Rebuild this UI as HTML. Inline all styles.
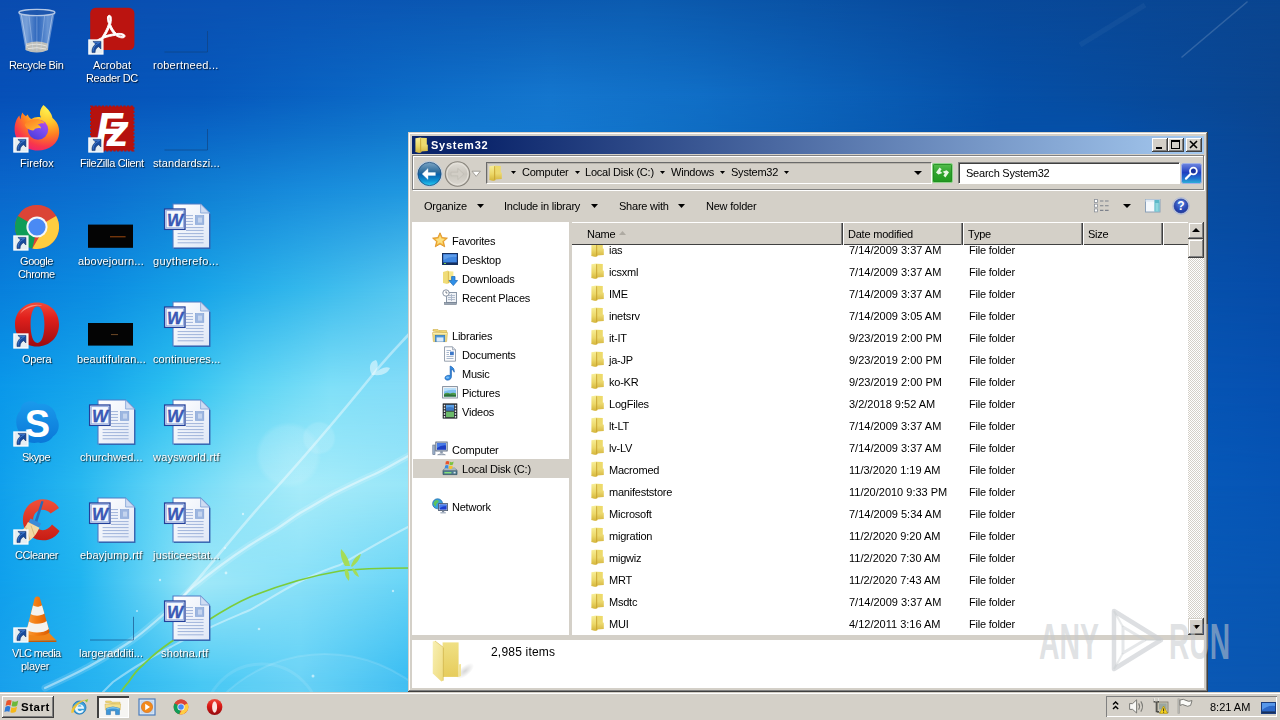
<!DOCTYPE html>
<html><head><meta charset="utf-8"><title>Desktop</title>
<style>
html,body{margin:0;padding:0}
body{width:1280px;height:720px;overflow:hidden;position:relative;font-family:"Liberation Sans",sans-serif;font-size:11px;color:#000;
background:#1273c8}
.abs{position:absolute}
#wall{display:none}
/* desktop icons */
.di{position:absolute;width:86px;text-align:center;color:#fff;font-size:11px;line-height:13px;text-shadow:1px 1px 1px rgba(0,0,0,.7),0 0 2px rgba(0,0,0,.25);letter-spacing:-.25px}
.di svg{display:block;overflow:visible}
.di svg text{text-shadow:none}
.di .lb{position:absolute;white-space:pre;text-align:left;will-change:transform}
/* window */
#win{position:absolute;left:408px;top:132px;width:800px;height:560px;background:#d4d0c8;
box-shadow:inset -1px -1px #404040,inset 1px 1px #d4d0c8,inset -2px -2px #808080,inset 2px 2px #fff}
#title{position:absolute;left:4px;top:4px;width:792px;height:18px;background:linear-gradient(90deg,#0a246a 0%,#0a246a 8%,#a6caf0 100%)}
#title .txt{will-change:transform;position:absolute;left:19px;top:2px;color:#fff;font-weight:bold;font-size:11px;line-height:14px;letter-spacing:.75px}
.cbtn{position:absolute;top:2px;width:16px;height:14px;background:#d4d0c8;box-shadow:inset -1px -1px #404040,inset 1px 1px #fff,inset -2px -2px #808080,inset 2px 2px #d4d0c8}
#navbar{position:absolute;left:4px;top:23px;width:792px;height:35px;border:1px solid #808080;box-sizing:border-box;box-shadow:inset 1px 1px #fff, 1px 1px #fff}
#addr{position:absolute;left:78px;top:30px;width:446px;height:22px;box-sizing:border-box;border:1px solid #6a6a6a;border-right-color:#fff;border-bottom-color:#fff;box-shadow:inset 1px 1px #b8b4ac;background:#d4d0c8}
#search{position:absolute;left:550px;top:30px;width:222px;height:22px;box-sizing:border-box;border:1px solid #808080;border-right-color:#fff;border-bottom-color:#fff;box-shadow:inset 1px 1px #404040;background:#fff}
.t{position:absolute;white-space:pre;line-height:13px;letter-spacing:-.22px;will-change:transform}
#navpane{position:absolute;left:4px;top:90px;width:157px;height:413px;background:#fff}
#list{position:absolute;left:164px;top:90px;width:616px;height:413px;background:#fff;overflow:hidden}
#hdr{position:absolute;left:0;top:0;width:616px;height:23px;background:#d4d0c8;box-shadow:inset 0 1px #fff,inset 0 -1px #404040}
.sep{position:absolute;top:1px;width:1px;height:22px;background:#404040;box-shadow:1px 0 #fff,-1px 0 #808080}
.row{position:absolute;left:0;width:616px;height:22px}
#sb{position:absolute;left:780px;top:90px;width:16px;height:413px;background:repeating-conic-gradient(#fff 0% 25%,#d4d0c8 0% 50%) 0 0/2px 2px}
.sbb{position:absolute;left:0;width:16px;background:#d4d0c8;box-shadow:inset -1px -1px #404040,inset 1px 1px #d4d0c8,inset -2px -2px #808080,inset 2px 2px #fff}
#details{position:absolute;left:4px;top:508px;width:792px;height:48px;background:#fff}
/* taskbar */
#task{position:absolute;left:0;top:692px;width:1280px;height:28px;background:#d4d0c8;box-shadow:inset 0 1px #d4d0c8,inset 0 2px #fff}
#start{position:absolute;left:2px;top:4px;width:52px;height:22px;background:#d4d0c8;box-shadow:inset -1px -1px #404040,inset 1px 1px #fff,inset -2px -2px #808080,inset 2px 2px #d4d0c8}
#tray{position:absolute;left:1106px;top:4px;width:171px;height:21px;box-shadow:inset 1px 1px #808080,inset -1px -1px #fff}
</style></head><body>
<div id="wall"></div>
<svg class="abs" style="left:0;top:0" width="1280" height="720" viewBox="0 0 1280 720"><defs><linearGradient id="wr0" gradientUnits="userSpaceOnUse" x1="0" y1="0" x2="1280" y2="0"><stop offset="0.0000" stop-color="#0a4cb0"/><stop offset="0.2344" stop-color="#0a54b4"/><stop offset="0.5000" stop-color="#0c5cb0"/><stop offset="0.7500" stop-color="#084a9c"/><stop offset="1.0000" stop-color="#0a4590"/></linearGradient><linearGradient id="wr1" gradientUnits="userSpaceOnUse" x1="0" y1="0" x2="1280" y2="0"><stop offset="0.0000" stop-color="#0650b8"/><stop offset="0.1562" stop-color="#0658bc"/><stop offset="0.3187" stop-color="#0c6cc8"/><stop offset="0.4297" stop-color="#1476ce"/><stop offset="0.5469" stop-color="#106ec6"/><stop offset="0.7812" stop-color="#0550a8"/><stop offset="1.0000" stop-color="#0a4590"/></linearGradient><linearGradient id="wr2" gradientUnits="userSpaceOnUse" x1="0" y1="0" x2="1280" y2="0"><stop offset="0.0000" stop-color="#0858c0"/><stop offset="0.1562" stop-color="#0a66c6"/><stop offset="0.3187" stop-color="#127ace"/><stop offset="0.4297" stop-color="#1478d0"/><stop offset="0.5000" stop-color="#1172c8"/><stop offset="0.7812" stop-color="#0550a8"/><stop offset="0.8594" stop-color="#0550a8"/><stop offset="1.0000" stop-color="#0a4694"/></linearGradient><linearGradient id="wr3" gradientUnits="userSpaceOnUse" x1="0" y1="0" x2="1280" y2="0"><stop offset="0.0000" stop-color="#0a68cc"/><stop offset="0.0781" stop-color="#0c70d0"/><stop offset="0.1562" stop-color="#1080d4"/><stop offset="0.2344" stop-color="#188cdc"/><stop offset="0.3187" stop-color="#2098e0"/><stop offset="0.4688" stop-color="#2098e0"/><stop offset="0.7812" stop-color="#0a58b0"/><stop offset="0.9437" stop-color="#084ca0"/><stop offset="1.0000" stop-color="#08489c"/></linearGradient><linearGradient id="wr4" gradientUnits="userSpaceOnUse" x1="0" y1="0" x2="1280" y2="0"><stop offset="0.0000" stop-color="#0880dc"/><stop offset="0.0781" stop-color="#0c8ee2"/><stop offset="0.1562" stop-color="#18a4e8"/><stop offset="0.2344" stop-color="#34b8ec"/><stop offset="0.3187" stop-color="#58c8f0"/><stop offset="0.4688" stop-color="#58c8f0"/><stop offset="0.7812" stop-color="#0c60b8"/><stop offset="0.9437" stop-color="#0650ac"/><stop offset="1.0000" stop-color="#064ca8"/></linearGradient><linearGradient id="wr5" gradientUnits="userSpaceOnUse" x1="0" y1="0" x2="1280" y2="0"><stop offset="0.0000" stop-color="#0a98ea"/><stop offset="0.0781" stop-color="#18a8ec"/><stop offset="0.1328" stop-color="#2cc0f0"/><stop offset="0.1953" stop-color="#5cd4f4"/><stop offset="0.2578" stop-color="#80e0f8"/><stop offset="0.3187" stop-color="#84dcf8"/><stop offset="0.4688" stop-color="#70d0f4"/><stop offset="0.7812" stop-color="#0e64bc"/><stop offset="0.9437" stop-color="#0654b4"/><stop offset="1.0000" stop-color="#0650b0"/></linearGradient><linearGradient id="wr6" gradientUnits="userSpaceOnUse" x1="0" y1="0" x2="1280" y2="0"><stop offset="0.0000" stop-color="#10a0ec"/><stop offset="0.0625" stop-color="#28b8f0"/><stop offset="0.1250" stop-color="#60d4f6"/><stop offset="0.1875" stop-color="#90e4f8"/><stop offset="0.2344" stop-color="#a8ecfa"/><stop offset="0.3187" stop-color="#98e6f8"/><stop offset="0.4688" stop-color="#70d0f4"/><stop offset="0.7812" stop-color="#0e64bc"/><stop offset="0.9437" stop-color="#0658b8"/><stop offset="1.0000" stop-color="#0654b4"/></linearGradient><linearGradient id="wr7" gradientUnits="userSpaceOnUse" x1="0" y1="0" x2="1280" y2="0"><stop offset="0.0000" stop-color="#10a0ec"/><stop offset="0.0625" stop-color="#20b4f0"/><stop offset="0.1250" stop-color="#70d8f6"/><stop offset="0.1562" stop-color="#a0e8f8"/><stop offset="0.2344" stop-color="#88e0f8"/><stop offset="0.3187" stop-color="#68d4f6"/><stop offset="0.4688" stop-color="#50c0f0"/><stop offset="0.7812" stop-color="#0e64bc"/><stop offset="0.9437" stop-color="#0858b6"/><stop offset="1.0000" stop-color="#0856b2"/></linearGradient><linearGradient id="wr8" gradientUnits="userSpaceOnUse" x1="0" y1="0" x2="1280" y2="0"><stop offset="0.0000" stop-color="#18a0ec"/><stop offset="0.0781" stop-color="#28b4f0"/><stop offset="0.1562" stop-color="#48c8f4"/><stop offset="0.2344" stop-color="#60d0f6"/><stop offset="0.3187" stop-color="#38bcf2"/><stop offset="0.4688" stop-color="#30b0ec"/><stop offset="0.7812" stop-color="#0e64bc"/><stop offset="0.9437" stop-color="#0a58b4"/><stop offset="1.0000" stop-color="#0a56b0"/></linearGradient><linearGradient id="wr9" gradientUnits="userSpaceOnUse" x1="0" y1="0" x2="1280" y2="0"><stop offset="0.0000" stop-color="#18a0ec"/><stop offset="0.0781" stop-color="#28b4f0"/><stop offset="0.1562" stop-color="#48c8f4"/><stop offset="0.2344" stop-color="#60d0f6"/><stop offset="0.3187" stop-color="#38bcf2"/><stop offset="0.4688" stop-color="#30b0ec"/><stop offset="0.7812" stop-color="#0e64bc"/><stop offset="0.9437" stop-color="#0a58b4"/><stop offset="1.0000" stop-color="#0a56b0"/></linearGradient><linearGradient id="wvm" x1="0" y1="0" x2="0" y2="1"><stop offset="0" stop-color="#fff" stop-opacity="0"/><stop offset="1" stop-color="#fff" stop-opacity="1"/></linearGradient><mask id="wm" maskContentUnits="objectBoundingBox"><rect width="1" height="1" fill="url(#wvm)"/></mask><radialGradient id="bok"><stop offset="0" stop-color="#fff" stop-opacity=".16"/><stop offset=".85" stop-color="#fff" stop-opacity=".12"/><stop offset="1" stop-color="#fff" stop-opacity="0"/></radialGradient></defs><rect x="0" y="0" width="1280" height="97" fill="url(#wr0)"/><rect x="0" y="0" width="1280" height="96" fill="url(#wr1)" mask="url(#wm)"/><rect x="0" y="96" width="1280" height="37" fill="url(#wr1)"/><rect x="0" y="96" width="1280" height="36" fill="url(#wr2)" mask="url(#wm)"/><rect x="0" y="132" width="1280" height="61" fill="url(#wr2)"/><rect x="0" y="132" width="1280" height="60" fill="url(#wr3)" mask="url(#wm)"/><rect x="0" y="192" width="1280" height="99" fill="url(#wr3)"/><rect x="0" y="192" width="1280" height="98" fill="url(#wr4)" mask="url(#wm)"/><rect x="0" y="290" width="1280" height="99" fill="url(#wr4)"/><rect x="0" y="290" width="1280" height="98" fill="url(#wr5)" mask="url(#wm)"/><rect x="0" y="388" width="1280" height="99" fill="url(#wr5)"/><rect x="0" y="388" width="1280" height="98" fill="url(#wr6)" mask="url(#wm)"/><rect x="0" y="486" width="1280" height="99" fill="url(#wr6)"/><rect x="0" y="486" width="1280" height="98" fill="url(#wr7)" mask="url(#wm)"/><rect x="0" y="584" width="1280" height="99" fill="url(#wr7)"/><rect x="0" y="584" width="1280" height="98" fill="url(#wr8)" mask="url(#wm)"/><rect x="0" y="682" width="1280" height="39" fill="url(#wr8)"/><rect x="0" y="682" width="1280" height="38" fill="url(#wr9)" mask="url(#wm)"/><g fill="none" stroke-linecap="round">
<circle cx="288.5" cy="455" r="33" fill="url(#bok)" stroke="none"/>
<circle cx="319" cy="438" r="17" fill="url(#bok)" stroke="none"/>
<circle cx="262" cy="722" r="58" fill="none" stroke="#fff" stroke-opacity=".10" stroke-width="3"/>
<circle cx="325" cy="800" r="146" fill="#fff" fill-opacity=".06" stroke="#fff" stroke-opacity=".12" stroke-width="2"/>
<path d="M180 600 C215 560 240 528 263.5 502 C300 462 340 415 375 372 C388 356 398 346 410 333" stroke="#fff" stroke-opacity=".42" stroke-width="2.6"/>
<path d="M372 375 C368 368 370 361 376 360 C379 364 378 370 374 374 C380 368 386 366 390 368 C388 373 382 376 375 375 Z" fill="#fff" fill-opacity=".5" stroke="none"/>
<path d="M45 688 C60 681 75 674 88 667 C104 658 118 650 131 641 C140 635 148 628 156 621 C168 611 180 599 192 588 C210 573 230 558 250 545 C258 540 266 535 275 530 C283 525 292 518 300 513 C311 507 322 500 333 494 C347 487 361 480 375 474 C386 469 397 462 410 455" stroke="#fff" stroke-opacity=".16" stroke-width="7"/><path d="M45 688 C60 681 75 674 88 667 C104 658 118 650 131 641 C140 635 148 628 156 621 C168 611 180 599 192 588 C210 573 230 558 250 545 C258 540 266 535 275 530 C283 525 292 518 300 513 C311 507 322 500 333 494 C347 487 361 480 375 474 C386 469 397 462 410 455" stroke="#fff" stroke-opacity=".45" stroke-width="2.2"/>
<path d="M103 692 C106 689 110 685 113 682 C123 675 133 668 144 662 C153 657 162 651 171.6 646.5 C183 640 195 634 207 629 C221 622 236 616 250 610 C268 600 286 588 303 580 C318 573 330 568 340 565 C363 552 386 538 410 526" stroke="#fff" stroke-opacity=".42" stroke-width="2"/>
<path d="M121 692 C123 688 126 685 128.6 682 C133 675 138 669 144 664 C152 656 162 648 171.6 641.5 C183 634 195 627 207 621 C221 612 236 603 250 597 C280 585 310 576 340 571 C363 568 386 568 410 568" stroke="#7ccc3a" stroke-width="1.7"/>
<path d="M345 566 C342 561 340 555 341 549 C345 553 349 559 350 566 Z M351 566 C353 560 356 556 361 554 C360 559 357 563 352 567 Z M345 569 C344 574 346 578 349 581 C350 576 349 572 347 569 Z M352 569 C353 573 356 576 359 577 C358 573 356 570 353 568 Z" fill="#a4dc58" stroke="none"/>
<g fill="#fff" fill-opacity=".55" stroke="none"><circle cx="243" cy="514" r="1.2"/><circle cx="226" cy="573" r="1.4"/><circle cx="259" cy="629" r="1.3"/><circle cx="313" cy="676" r="1.5"/><circle cx="393" cy="591" r="1.2"/><circle cx="160" cy="580" r="1.2"/><circle cx="225" cy="548" r="1"/><circle cx="137" cy="611" r="1.1"/></g>
<path d="M1182 57 L1247 2" stroke="#fff" stroke-opacity=".16" stroke-width="1.6"/><path d="M1080 45 L1145 5" stroke="#fff" stroke-opacity=".04" stroke-width="5" stroke-linecap="butt"/>
</g></svg>
<div class="di" style="left:-7px;top:6px"><svg width="50" height="50" viewBox="0 0 50 50" style="margin-left:19px"><defs><linearGradient id="rb" x1="0" y1="0" x2="1" y2="0"><stop offset="0" stop-color="#6d98d6" stop-opacity=".85"/><stop offset=".22" stop-color="#a9c4e8" stop-opacity=".7"/><stop offset=".5" stop-color="#4a7ac4" stop-opacity=".55"/><stop offset=".8" stop-color="#8fb2e2" stop-opacity=".7"/><stop offset="1" stop-color="#5a88cc" stop-opacity=".85"/></linearGradient></defs>
<path d="M7 6.5 L13.6 44 Q24.8 49 36 44 L42.8 6.5 Q24.9 12 7 6.5 Z" fill="url(#rb)"/>
<path d="M14.2 37.5 Q24.8 33.5 35.6 37.5 L36 44 Q24.8 49 13.6 44 Z" fill="#c4c2b8" opacity=".95"/>
<path d="M15 39.6 Q24 36.6 34.6 40 M16 42.6 Q25 40.6 34 43" stroke="#e6e4dc" stroke-width="1" fill="none"/>
<path d="M17 10 L21 44 M24.9 10.5 L24.9 45 M32.6 10 L28.8 44" stroke="#cfe0f6" stroke-width=".8" opacity=".45"/>
<path d="M9.4 9 L15 42 M40.4 9 L34.8 42" stroke="#dce8f8" stroke-width="1" opacity=".5"/>
<ellipse cx="24.9" cy="6.5" rx="18" ry="3.1" fill="#2a5cac" fill-opacity=".65" stroke="#b4c8e6" stroke-width="1.3"/></svg><div class="lb" style="left:16.25px;top:53px;letter-spacing:-0.33px">Recycle Bin</div></div>
<div class="di" style="left:68px;top:6px"><svg width="50" height="50" viewBox="0 0 50 50" style="margin-left:19px"><rect x="3.2" y="1.8" width="44.2" height="42.2" rx="5.5" fill="#bb1410"/>
<path d="M22.6 11 C20.4 11 20.6 15 22 18.6 C20.6 23.4 17.6 28.6 15.6 31.4 C12.6 32.6 9.4 34.8 10.6 36.8 C12.2 38.8 15.2 35.4 17.4 31.8 C20.6 30.6 25 29.6 28.2 29.2 C30.8 31.2 35.6 32.6 36.8 30.4 C37.8 28 32.8 27 29 27.6 C27 25.6 24.8 22.2 23.8 19.4 C24.8 15.6 25 11 22.6 11 Z M22.6 12.6 C23.4 13 23.2 15.4 22.8 17 C22.2 15.2 21.8 13 22.6 12.6 Z M22.8 21.6 C23.8 24 25.4 26.4 26.8 27.8 C24.2 28.2 21 29 18.6 29.8 C20.2 27.4 21.8 24.4 22.8 21.6 Z M30.6 28.8 C33 28.6 35.4 29.2 35 30 C34.4 30.8 32.2 30 30.6 28.8 Z M14.4 33.2 C13.4 34.8 12.2 36 11.8 35.8 C11.6 35.2 13 34 14.4 33.2 Z" fill="#fff" fill-rule="evenodd" stroke="#fff" stroke-width=".9" transform="translate(-2.6,-2.8) scale(1.1)"/><g transform="translate(1.3,33.4)"><rect x=".6" y=".6" width="14" height="14" fill="#e6eef2" stroke="#fbfcfd" stroke-width="1.3"/>
<path d="M4.6 2 L12.6 2 L12.6 9.6 L10.3 7.3 C7.8 8.6 6.8 10.6 6.8 13.2 L3.7 13.2 C3.2 9.6 4.8 6.6 7.3 4.6 Z" fill="#174a9c" stroke="#0c2c66" stroke-width=".5"/>
<path d="M5.6 3 L11.4 3 L7.6 5.4 C5.8 7 4.8 9.4 4.8 12" fill="none" stroke="#4a86d8" stroke-width=".9" opacity=".8"/></g></svg><div class="lb" style="left:24.50px;top:53px;letter-spacing:0.01px">Acrobat</div><div class="lb" style="left:17.50px;top:66px;letter-spacing:-0.34px">Reader DC</div></div>
<div class="di" style="left:143px;top:6px"><svg width="50" height="50" viewBox="0 0 50 50" style="margin-left:19px"><path d="M45.5 25 L45.5 46 L2.5 46" fill="none" stroke="#123f78" stroke-opacity=".6" stroke-width="1"/></svg><div class="lb" style="left:9.50px;top:53px;letter-spacing:0.24px">robertneed...</div></div>
<div class="di" style="left:-7px;top:104px"><svg width="50" height="50" viewBox="0 0 50 50" style="margin-left:19px"><defs><radialGradient id="ffo" cx=".74" cy=".08" r="1.05"><stop offset="0" stop-color="#fff450"/><stop offset=".3" stop-color="#ffc42c"/><stop offset=".55" stop-color="#ff8022"/><stop offset=".8" stop-color="#f8364c"/><stop offset="1" stop-color="#e81a80"/></radialGradient>
<linearGradient id="ffp" x1=".8" y1="0" x2=".2" y2="1"><stop offset="0" stop-color="#c044e8"/><stop offset=".45" stop-color="#7a4cf0"/><stop offset="1" stop-color="#4a3cd8"/></linearGradient>
<linearGradient id="ffh" x1="0" y1="0" x2="1" y2="1"><stop offset="0" stop-color="#ff7a24"/><stop offset=".6" stop-color="#ffa62c"/><stop offset="1" stop-color="#ffd23c"/></linearGradient></defs>
<path d="M31.4 1 C36.5 5 40 10 40.5 14 C44.5 17 47.6 22 47.2 29 C46.6 39.6 37 46.6 25.6 46.5 C13 46.4 2.4 37.4 2.6 25 C2.7 18.6 5 14 7.4 11.6 C7.6 13.2 8 14.6 8.6 15.6 C8.8 12.6 9.4 10 10.4 8.4 C11.4 10 12.6 11.4 14 12.2 C14.4 11.4 15 10.8 15.8 10.4 C16.4 12.4 17.6 14 19.4 15 C22 13 26 12.4 29 13.4 C27 10 28 4.5 31.4 1 Z" fill="url(#ffo)"/>
<circle cx="26" cy="25.6" r="10.2" fill="url(#ffp)"/>
<path d="M12.6 21 C15 16.6 21 14.6 26.6 15.6 C29.6 16.2 31.8 17.6 32.6 19.4 C30 18.8 27.4 19.4 25.6 20.8 C27.8 21.4 29 22.8 29 24.4 C26.4 23.4 23 24.2 21.4 26.4 C18 26.6 14.4 25 12.6 21 Z" fill="url(#ffh)"/>
<path d="M29 24.4 C30.4 29.4 27.4 34.4 22.4 34.8 C17.4 35 13.6 31 13 26.4 C15.6 28.6 19 28.2 21.4 26.4 C23 24.2 26.4 23.4 29 24.4 Z" fill="#5a3ad8" opacity=".0"/><g transform="translate(1.3,33.4)"><rect x=".6" y=".6" width="14" height="14" fill="#e6eef2" stroke="#fbfcfd" stroke-width="1.3"/>
<path d="M4.6 2 L12.6 2 L12.6 9.6 L10.3 7.3 C7.8 8.6 6.8 10.6 6.8 13.2 L3.7 13.2 C3.2 9.6 4.8 6.6 7.3 4.6 Z" fill="#174a9c" stroke="#0c2c66" stroke-width=".5"/>
<path d="M5.6 3 L11.4 3 L7.6 5.4 C5.8 7 4.8 9.4 4.8 12" fill="none" stroke="#4a86d8" stroke-width=".9" opacity=".8"/></g></svg><div class="lb" style="left:26.50px;top:53px;letter-spacing:0.02px">Firefox</div></div>
<div class="di" style="left:68px;top:104px"><svg width="50" height="50" viewBox="0 0 50 50" style="margin-left:19px"><path d="M4 2.5 H46.5 V46.5 H4 Z" fill="#b5120e" stroke="#b5120e" stroke-width="2" stroke-dasharray="2.2 1.4"/>
<rect x="4.6" y="3.1" width="41.3" height="42.8" fill="#b5120e"/>
<text x="8.5" y="42" font-family="Liberation Sans, sans-serif" font-weight="bold" font-style="italic" font-size="49" fill="#fff" textLength="27" lengthAdjust="spacingAndGlyphs">F</text>
<text x="19.5" y="42" font-family="Liberation Sans, sans-serif" font-weight="bold" font-style="italic" font-size="44" fill="#fff" textLength="22" lengthAdjust="spacingAndGlyphs">z</text><g transform="translate(1.3,33.4)"><rect x=".6" y=".6" width="14" height="14" fill="#e6eef2" stroke="#fbfcfd" stroke-width="1.3"/>
<path d="M4.6 2 L12.6 2 L12.6 9.6 L10.3 7.3 C7.8 8.6 6.8 10.6 6.8 13.2 L3.7 13.2 C3.2 9.6 4.8 6.6 7.3 4.6 Z" fill="#174a9c" stroke="#0c2c66" stroke-width=".5"/>
<path d="M5.6 3 L11.4 3 L7.6 5.4 C5.8 7 4.8 9.4 4.8 12" fill="none" stroke="#4a86d8" stroke-width=".9" opacity=".8"/></g></svg><div class="lb" style="left:11.50px;top:53px;letter-spacing:-0.33px">FileZilla Client</div></div>
<div class="di" style="left:143px;top:104px"><svg width="50" height="50" viewBox="0 0 50 50" style="margin-left:19px"><path d="M45.5 25 L45.5 46 L2.5 46" fill="none" stroke="#123f78" stroke-opacity=".6" stroke-width="1"/></svg><div class="lb" style="left:10.25px;top:53px;letter-spacing:0.10px">standardszi...</div></div>
<div class="di" style="left:-7px;top:202px"><svg width="50" height="50" viewBox="0 0 50 50" style="margin-left:19px"><circle cx="25" cy="25" r="22" fill="#db4437"/>
<path d="M25 25 L5.9 14 A22 22 0 0 0 20.4 46.5 Z" fill="#0f9d58"/>
<path d="M25 25 L44.1 14 A22 22 0 0 1 20.4 46.5 L30 30 Z" fill="#ffcd40"/>
<path d="M5.9 14 A22 22 0 0 1 44.1 14 L25 14 Z" fill="#db4437"/>
<circle cx="25" cy="25" r="10.6" fill="#f4f6f8"/><circle cx="25" cy="25" r="8.6" fill="#4a8af4"/><g transform="translate(1.3,33.4)"><rect x=".6" y=".6" width="14" height="14" fill="#e6eef2" stroke="#fbfcfd" stroke-width="1.3"/>
<path d="M4.6 2 L12.6 2 L12.6 9.6 L10.3 7.3 C7.8 8.6 6.8 10.6 6.8 13.2 L3.7 13.2 C3.2 9.6 4.8 6.6 7.3 4.6 Z" fill="#174a9c" stroke="#0c2c66" stroke-width=".5"/>
<path d="M5.6 3 L11.4 3 L7.6 5.4 C5.8 7 4.8 9.4 4.8 12" fill="none" stroke="#4a86d8" stroke-width=".9" opacity=".8"/></g></svg><div class="lb" style="left:26.50px;top:53px;letter-spacing:-0.41px">Google</div><div class="lb" style="left:24.50px;top:66px;letter-spacing:-0.40px">Chrome</div></div>
<div class="di" style="left:68px;top:202px"><svg width="50" height="50" viewBox="0 0 50 50" style="margin-left:19px"><rect x="1" y="22.6" width="45" height="23.2" fill="#040404"/><path d="M23 34.8 H38.6" stroke="#a04a10" stroke-width="1"/></svg><div class="lb" style="left:9.75px;top:53px;letter-spacing:0.18px">abovejourn...</div></div>
<div class="di" style="left:143px;top:202px"><svg width="50" height="50" viewBox="0 0 50 50" style="margin-left:19px"><defs><linearGradient id="wp" x1="0" y1="0" x2="1" y2="1"><stop offset="0" stop-color="#ffffff"/><stop offset="1" stop-color="#dfe7f6"/></linearGradient></defs>
<path d="M11 2 L38.6 2 L47.6 11 L47.6 46 L11 46 Z" fill="url(#wp)" stroke="#4f7ac4" stroke-width="1.1"/>
<path d="M47.8 12 V46.4 H12" fill="none" stroke="#2e5aa8" stroke-width="1.2" opacity=".8"/>
<path d="M38.6 2 L38.6 11 L47.6 11 Z" fill="#cfdcf2" stroke="#7f9fd4" stroke-width=".8"/>
<rect x="33.4" y="13.6" width="8.4" height="8.8" fill="#9db6e0" stroke="#7f9fd4" stroke-width=".6"/><rect x="36" y="15.6" width="4" height="5" fill="#c4d4ee"/>
<path d="M24 13.6 H31 M24 16.6 H31 M24 19.4 H31 M24 22.4 H31 M24 25.6 H41.6 M24 28.4 H41.6 M15.6 31.6 H41.6 M15.6 34.6 H41.6 M15.6 37.6 H41.6 M15.6 40.8 H41.6" stroke="#9fb3da" stroke-width="1"/>
<rect x="2.6" y="7" width="20.4" height="20.4" fill="#f6f9fe" stroke="#23409a" stroke-width="1.3"/>
<rect x="4.2" y="8.6" width="17.2" height="17.2" fill="none" stroke="#8fa9e0" stroke-width=".9"/>
<text x="12.8" y="23.6" text-anchor="middle" font-family="Liberation Sans, sans-serif" font-weight="bold" font-style="italic" font-size="17" fill="#3c5cbc" stroke="#2a4498" stroke-width=".3">W</text></svg><div class="lb" style="left:10.25px;top:53px;letter-spacing:0.37px">guytherefo...</div></div>
<div class="di" style="left:-7px;top:300px"><svg width="50" height="50" viewBox="0 0 50 50" style="margin-left:19px"><defs><linearGradient id="op" x1="0" y1="0" x2="0" y2="1"><stop offset="0" stop-color="#f04a3a"/><stop offset=".35" stop-color="#e0201c"/><stop offset="1" stop-color="#9c0c10"/></linearGradient></defs>
<path d="M25 2.6 C38 2.6 47 12 47 24.6 C47 37.2 38 46.6 25 46.6 C12 46.6 3 37.2 3 24.6 C3 12 12 2.6 25 2.6 Z M25.4 6.4 C21 6.4 18.6 14 18.6 24.6 C18.6 35.2 21 43 25.4 43 C29.8 43 32.4 35.2 32.4 24.6 C32.4 14 29.8 6.4 25.4 6.4 Z" fill="url(#op)" fill-rule="evenodd"/>
<path d="M8 14 C12 6 22 3.6 30 5.4 C22 5 12 9 8 14 Z" fill="#ffb0a0" opacity=".7"/><g transform="translate(1.3,33.4)"><rect x=".6" y=".6" width="14" height="14" fill="#e6eef2" stroke="#fbfcfd" stroke-width="1.3"/>
<path d="M4.6 2 L12.6 2 L12.6 9.6 L10.3 7.3 C7.8 8.6 6.8 10.6 6.8 13.2 L3.7 13.2 C3.2 9.6 4.8 6.6 7.3 4.6 Z" fill="#174a9c" stroke="#0c2c66" stroke-width=".5"/>
<path d="M5.6 3 L11.4 3 L7.6 5.4 C5.8 7 4.8 9.4 4.8 12" fill="none" stroke="#4a86d8" stroke-width=".9" opacity=".8"/></g></svg><div class="lb" style="left:28.90px;top:53px;letter-spacing:-0.24px">Opera</div></div>
<div class="di" style="left:68px;top:300px"><svg width="50" height="50" viewBox="0 0 50 50" style="margin-left:19px"><rect x="1" y="23" width="45" height="22.6" fill="#040404"/><path d="M24 34.6 H31" stroke="#8a5a30" stroke-width=".8"/></svg><div class="lb" style="left:8.50px;top:53px;letter-spacing:0.16px">beautifulran...</div></div>
<div class="di" style="left:143px;top:300px"><svg width="50" height="50" viewBox="0 0 50 50" style="margin-left:19px"><defs><linearGradient id="wp" x1="0" y1="0" x2="1" y2="1"><stop offset="0" stop-color="#ffffff"/><stop offset="1" stop-color="#dfe7f6"/></linearGradient></defs>
<path d="M11 2 L38.6 2 L47.6 11 L47.6 46 L11 46 Z" fill="url(#wp)" stroke="#4f7ac4" stroke-width="1.1"/>
<path d="M47.8 12 V46.4 H12" fill="none" stroke="#2e5aa8" stroke-width="1.2" opacity=".8"/>
<path d="M38.6 2 L38.6 11 L47.6 11 Z" fill="#cfdcf2" stroke="#7f9fd4" stroke-width=".8"/>
<rect x="33.4" y="13.6" width="8.4" height="8.8" fill="#9db6e0" stroke="#7f9fd4" stroke-width=".6"/><rect x="36" y="15.6" width="4" height="5" fill="#c4d4ee"/>
<path d="M24 13.6 H31 M24 16.6 H31 M24 19.4 H31 M24 22.4 H31 M24 25.6 H41.6 M24 28.4 H41.6 M15.6 31.6 H41.6 M15.6 34.6 H41.6 M15.6 37.6 H41.6 M15.6 40.8 H41.6" stroke="#9fb3da" stroke-width="1"/>
<rect x="2.6" y="7" width="20.4" height="20.4" fill="#f6f9fe" stroke="#23409a" stroke-width="1.3"/>
<rect x="4.2" y="8.6" width="17.2" height="17.2" fill="none" stroke="#8fa9e0" stroke-width=".9"/>
<text x="12.8" y="23.6" text-anchor="middle" font-family="Liberation Sans, sans-serif" font-weight="bold" font-style="italic" font-size="17" fill="#3c5cbc" stroke="#2a4498" stroke-width=".3">W</text></svg><div class="lb" style="left:9.50px;top:53px;letter-spacing:0.10px">continueres...</div></div>
<div class="di" style="left:-7px;top:398px"><svg width="50" height="50" viewBox="0 0 50 50" style="margin-left:19px"><defs><linearGradient id="sk" x1="0" y1="0" x2="0" y2="1"><stop offset="0" stop-color="#1a9aec"/><stop offset="1" stop-color="#0a78d8"/></linearGradient></defs>
<path d="M12 5 C18 1.6 24 4 26 6 C36 4 44 11 44.6 20 C48.6 26 47 35 41 38.6 C38 44 30 46 26 44.6 C18 46.4 8 42 6.6 33 C2.6 26 4 16 8.6 12.6 C8.6 9 10 6.4 12 5 Z" fill="url(#sk)"/>
<text x="25.4" y="38.6" text-anchor="middle" font-family="Liberation Sans, sans-serif" font-weight="bold" font-size="38" fill="#fff">S</text><g transform="translate(1.3,33.4)"><rect x=".6" y=".6" width="14" height="14" fill="#e6eef2" stroke="#fbfcfd" stroke-width="1.3"/>
<path d="M4.6 2 L12.6 2 L12.6 9.6 L10.3 7.3 C7.8 8.6 6.8 10.6 6.8 13.2 L3.7 13.2 C3.2 9.6 4.8 6.6 7.3 4.6 Z" fill="#174a9c" stroke="#0c2c66" stroke-width=".5"/>
<path d="M5.6 3 L11.4 3 L7.6 5.4 C5.8 7 4.8 9.4 4.8 12" fill="none" stroke="#4a86d8" stroke-width=".9" opacity=".8"/></g></svg><div class="lb" style="left:28.90px;top:53px;letter-spacing:-0.49px">Skype</div></div>
<div class="di" style="left:68px;top:398px"><svg width="50" height="50" viewBox="0 0 50 50" style="margin-left:19px"><defs><linearGradient id="wp" x1="0" y1="0" x2="1" y2="1"><stop offset="0" stop-color="#ffffff"/><stop offset="1" stop-color="#dfe7f6"/></linearGradient></defs>
<path d="M11 2 L38.6 2 L47.6 11 L47.6 46 L11 46 Z" fill="url(#wp)" stroke="#4f7ac4" stroke-width="1.1"/>
<path d="M47.8 12 V46.4 H12" fill="none" stroke="#2e5aa8" stroke-width="1.2" opacity=".8"/>
<path d="M38.6 2 L38.6 11 L47.6 11 Z" fill="#cfdcf2" stroke="#7f9fd4" stroke-width=".8"/>
<rect x="33.4" y="13.6" width="8.4" height="8.8" fill="#9db6e0" stroke="#7f9fd4" stroke-width=".6"/><rect x="36" y="15.6" width="4" height="5" fill="#c4d4ee"/>
<path d="M24 13.6 H31 M24 16.6 H31 M24 19.4 H31 M24 22.4 H31 M24 25.6 H41.6 M24 28.4 H41.6 M15.6 31.6 H41.6 M15.6 34.6 H41.6 M15.6 37.6 H41.6 M15.6 40.8 H41.6" stroke="#9fb3da" stroke-width="1"/>
<rect x="2.6" y="7" width="20.4" height="20.4" fill="#f6f9fe" stroke="#23409a" stroke-width="1.3"/>
<rect x="4.2" y="8.6" width="17.2" height="17.2" fill="none" stroke="#8fa9e0" stroke-width=".9"/>
<text x="12.8" y="23.6" text-anchor="middle" font-family="Liberation Sans, sans-serif" font-weight="bold" font-style="italic" font-size="17" fill="#3c5cbc" stroke="#2a4498" stroke-width=".3">W</text></svg><div class="lb" style="left:12.00px;top:53px;letter-spacing:0.01px">churchwed...</div></div>
<div class="di" style="left:143px;top:398px"><svg width="50" height="50" viewBox="0 0 50 50" style="margin-left:19px"><defs><linearGradient id="wp" x1="0" y1="0" x2="1" y2="1"><stop offset="0" stop-color="#ffffff"/><stop offset="1" stop-color="#dfe7f6"/></linearGradient></defs>
<path d="M11 2 L38.6 2 L47.6 11 L47.6 46 L11 46 Z" fill="url(#wp)" stroke="#4f7ac4" stroke-width="1.1"/>
<path d="M47.8 12 V46.4 H12" fill="none" stroke="#2e5aa8" stroke-width="1.2" opacity=".8"/>
<path d="M38.6 2 L38.6 11 L47.6 11 Z" fill="#cfdcf2" stroke="#7f9fd4" stroke-width=".8"/>
<rect x="33.4" y="13.6" width="8.4" height="8.8" fill="#9db6e0" stroke="#7f9fd4" stroke-width=".6"/><rect x="36" y="15.6" width="4" height="5" fill="#c4d4ee"/>
<path d="M24 13.6 H31 M24 16.6 H31 M24 19.4 H31 M24 22.4 H31 M24 25.6 H41.6 M24 28.4 H41.6 M15.6 31.6 H41.6 M15.6 34.6 H41.6 M15.6 37.6 H41.6 M15.6 40.8 H41.6" stroke="#9fb3da" stroke-width="1"/>
<rect x="2.6" y="7" width="20.4" height="20.4" fill="#f6f9fe" stroke="#23409a" stroke-width="1.3"/>
<rect x="4.2" y="8.6" width="17.2" height="17.2" fill="none" stroke="#8fa9e0" stroke-width=".9"/>
<text x="12.8" y="23.6" text-anchor="middle" font-family="Liberation Sans, sans-serif" font-weight="bold" font-style="italic" font-size="17" fill="#3c5cbc" stroke="#2a4498" stroke-width=".3">W</text></svg><div class="lb" style="left:9.50px;top:53px;letter-spacing:0.20px">waysworld.rtf</div></div>
<div class="di" style="left:-7px;top:496px"><svg width="50" height="50" viewBox="0 0 50 50" style="margin-left:19px"><defs><linearGradient id="cc" x1="0" y1="0" x2="0" y2="1"><stop offset="0" stop-color="#f05038"/><stop offset="1" stop-color="#c81c14"/></linearGradient></defs>
<path d="M47 12 C42 4 32 1.6 24 4.6 C13 8.6 8.6 20 12 31 C15.6 41.6 27 46.4 37 43.4 C42 41.8 45.6 38.6 47.6 35 L40 28.6 C37 33.6 31 35.6 26.4 33 C21 30 19.6 22.6 23 17.6 C26.4 12.6 34 12.4 38.6 17.4 Z" fill="url(#cc)"/>
<path d="M29.4 5 L31.6 5.6 L25 27 L22.4 26 Z" fill="#2a6ab8"/>
<path d="M18.6 22.6 L29 27.6 L27 31.6 L16.4 26.4 Z" fill="#3a8ad8"/>
<path d="M16 26 L27.4 31.8 C25 38 20 44 14.6 46.4 C11 44 8 40.6 7 37.4 C10.6 34.6 14 30.6 16 26 Z" fill="#f2d9a4"/>
<path d="M13.6 31 L18 44 M19 29.6 L22.6 40" stroke="#d4b070" stroke-width=".8"/><g transform="translate(1.3,33.4)"><rect x=".6" y=".6" width="14" height="14" fill="#e6eef2" stroke="#fbfcfd" stroke-width="1.3"/>
<path d="M4.6 2 L12.6 2 L12.6 9.6 L10.3 7.3 C7.8 8.6 6.8 10.6 6.8 13.2 L3.7 13.2 C3.2 9.6 4.8 6.6 7.3 4.6 Z" fill="#174a9c" stroke="#0c2c66" stroke-width=".5"/>
<path d="M5.6 3 L11.4 3 L7.6 5.4 C5.8 7 4.8 9.4 4.8 12" fill="none" stroke="#4a86d8" stroke-width=".9" opacity=".8"/></g></svg><div class="lb" style="left:21.75px;top:53px;letter-spacing:-0.43px">CCleaner</div></div>
<div class="di" style="left:68px;top:496px"><svg width="50" height="50" viewBox="0 0 50 50" style="margin-left:19px"><defs><linearGradient id="wp" x1="0" y1="0" x2="1" y2="1"><stop offset="0" stop-color="#ffffff"/><stop offset="1" stop-color="#dfe7f6"/></linearGradient></defs>
<path d="M11 2 L38.6 2 L47.6 11 L47.6 46 L11 46 Z" fill="url(#wp)" stroke="#4f7ac4" stroke-width="1.1"/>
<path d="M47.8 12 V46.4 H12" fill="none" stroke="#2e5aa8" stroke-width="1.2" opacity=".8"/>
<path d="M38.6 2 L38.6 11 L47.6 11 Z" fill="#cfdcf2" stroke="#7f9fd4" stroke-width=".8"/>
<rect x="33.4" y="13.6" width="8.4" height="8.8" fill="#9db6e0" stroke="#7f9fd4" stroke-width=".6"/><rect x="36" y="15.6" width="4" height="5" fill="#c4d4ee"/>
<path d="M24 13.6 H31 M24 16.6 H31 M24 19.4 H31 M24 22.4 H31 M24 25.6 H41.6 M24 28.4 H41.6 M15.6 31.6 H41.6 M15.6 34.6 H41.6 M15.6 37.6 H41.6 M15.6 40.8 H41.6" stroke="#9fb3da" stroke-width="1"/>
<rect x="2.6" y="7" width="20.4" height="20.4" fill="#f6f9fe" stroke="#23409a" stroke-width="1.3"/>
<rect x="4.2" y="8.6" width="17.2" height="17.2" fill="none" stroke="#8fa9e0" stroke-width=".9"/>
<text x="12.8" y="23.6" text-anchor="middle" font-family="Liberation Sans, sans-serif" font-weight="bold" font-style="italic" font-size="17" fill="#3c5cbc" stroke="#2a4498" stroke-width=".3">W</text></svg><div class="lb" style="left:12.00px;top:53px;letter-spacing:0.16px">ebayjump.rtf</div></div>
<div class="di" style="left:143px;top:496px"><svg width="50" height="50" viewBox="0 0 50 50" style="margin-left:19px"><defs><linearGradient id="wp" x1="0" y1="0" x2="1" y2="1"><stop offset="0" stop-color="#ffffff"/><stop offset="1" stop-color="#dfe7f6"/></linearGradient></defs>
<path d="M11 2 L38.6 2 L47.6 11 L47.6 46 L11 46 Z" fill="url(#wp)" stroke="#4f7ac4" stroke-width="1.1"/>
<path d="M47.8 12 V46.4 H12" fill="none" stroke="#2e5aa8" stroke-width="1.2" opacity=".8"/>
<path d="M38.6 2 L38.6 11 L47.6 11 Z" fill="#cfdcf2" stroke="#7f9fd4" stroke-width=".8"/>
<rect x="33.4" y="13.6" width="8.4" height="8.8" fill="#9db6e0" stroke="#7f9fd4" stroke-width=".6"/><rect x="36" y="15.6" width="4" height="5" fill="#c4d4ee"/>
<path d="M24 13.6 H31 M24 16.6 H31 M24 19.4 H31 M24 22.4 H31 M24 25.6 H41.6 M24 28.4 H41.6 M15.6 31.6 H41.6 M15.6 34.6 H41.6 M15.6 37.6 H41.6 M15.6 40.8 H41.6" stroke="#9fb3da" stroke-width="1"/>
<rect x="2.6" y="7" width="20.4" height="20.4" fill="#f6f9fe" stroke="#23409a" stroke-width="1.3"/>
<rect x="4.2" y="8.6" width="17.2" height="17.2" fill="none" stroke="#8fa9e0" stroke-width=".9"/>
<text x="12.8" y="23.6" text-anchor="middle" font-family="Liberation Sans, sans-serif" font-weight="bold" font-style="italic" font-size="17" fill="#3c5cbc" stroke="#2a4498" stroke-width=".3">W</text></svg><div class="lb" style="left:10.00px;top:53px;letter-spacing:0.19px">justiceestat...</div></div>
<div class="di" style="left:-7px;top:594px"><svg width="50" height="50" viewBox="0 0 50 50" style="margin-left:19px"><defs><linearGradient id="vl" x1="0" y1="0" x2="1" y2="0"><stop offset="0" stop-color="#f8a040"/><stop offset=".45" stop-color="#f47c10"/><stop offset="1" stop-color="#d85c04"/></linearGradient></defs>
<path d="M10.6 37 L30 31.6 L44.4 46.6 L12 47 Z" fill="#f08418"/>
<path d="M12 47 L44.4 46.6 L44.4 48 L12 48 Z" fill="#c45a08"/>
<path d="M24.9 2.6 C26.6 2.2 27.6 3 28 4.4 L37.6 37.6 C37 42.6 16.6 43.6 14 38.6 L22.6 4.6 C23 3.4 23.8 2.8 24.9 2.6 Z" fill="url(#vl)"/>
<path d="M21 11.6 C23.6 13.2 27.6 13 30 11.2 L32.4 19.6 C29 22.2 22 22.4 18.8 20 Z" fill="#f4f2ee"/>
<path d="M17 27.4 C21 30.6 30.6 30.4 34.6 27 L36.8 35 C32 39.4 19.6 39.8 14.8 35.8 Z" fill="#f4f2ee"/><g transform="translate(1.3,33.4)"><rect x=".6" y=".6" width="14" height="14" fill="#e6eef2" stroke="#fbfcfd" stroke-width="1.3"/>
<path d="M4.6 2 L12.6 2 L12.6 9.6 L10.3 7.3 C7.8 8.6 6.8 10.6 6.8 13.2 L3.7 13.2 C3.2 9.6 4.8 6.6 7.3 4.6 Z" fill="#174a9c" stroke="#0c2c66" stroke-width=".5"/>
<path d="M5.6 3 L11.4 3 L7.6 5.4 C5.8 7 4.8 9.4 4.8 12" fill="none" stroke="#4a86d8" stroke-width=".9" opacity=".8"/></g></svg><div class="lb" style="left:18.90px;top:53px;letter-spacing:-0.67px">VLC media</div><div class="lb" style="left:27.60px;top:66px;letter-spacing:-0.30px">player</div></div>
<div class="di" style="left:68px;top:594px"><svg width="50" height="50" viewBox="0 0 50 50" style="margin-left:19px"><path d="M46.5 22.8 L46.5 46 L3 46" fill="none" stroke="#123f78" stroke-opacity=".6" stroke-width="1"/></svg><div class="lb" style="left:10.50px;top:53px;letter-spacing:0.03px">largeradditi...</div></div>
<div class="di" style="left:143px;top:594px"><svg width="50" height="50" viewBox="0 0 50 50" style="margin-left:19px"><defs><linearGradient id="wp" x1="0" y1="0" x2="1" y2="1"><stop offset="0" stop-color="#ffffff"/><stop offset="1" stop-color="#dfe7f6"/></linearGradient></defs>
<path d="M11 2 L38.6 2 L47.6 11 L47.6 46 L11 46 Z" fill="url(#wp)" stroke="#4f7ac4" stroke-width="1.1"/>
<path d="M47.8 12 V46.4 H12" fill="none" stroke="#2e5aa8" stroke-width="1.2" opacity=".8"/>
<path d="M38.6 2 L38.6 11 L47.6 11 Z" fill="#cfdcf2" stroke="#7f9fd4" stroke-width=".8"/>
<rect x="33.4" y="13.6" width="8.4" height="8.8" fill="#9db6e0" stroke="#7f9fd4" stroke-width=".6"/><rect x="36" y="15.6" width="4" height="5" fill="#c4d4ee"/>
<path d="M24 13.6 H31 M24 16.6 H31 M24 19.4 H31 M24 22.4 H31 M24 25.6 H41.6 M24 28.4 H41.6 M15.6 31.6 H41.6 M15.6 34.6 H41.6 M15.6 37.6 H41.6 M15.6 40.8 H41.6" stroke="#9fb3da" stroke-width="1"/>
<rect x="2.6" y="7" width="20.4" height="20.4" fill="#f6f9fe" stroke="#23409a" stroke-width="1.3"/>
<rect x="4.2" y="8.6" width="17.2" height="17.2" fill="none" stroke="#8fa9e0" stroke-width=".9"/>
<text x="12.8" y="23.6" text-anchor="middle" font-family="Liberation Sans, sans-serif" font-weight="bold" font-style="italic" font-size="17" fill="#3c5cbc" stroke="#2a4498" stroke-width=".3">W</text></svg><div class="lb" style="left:18.25px;top:53px;letter-spacing:0.16px">shotna.rtf</div></div>

<div id="win">
 <div id="title"><svg class="abs" style="left:2px;top:1px" width="16" height="16" viewBox="0 0 16 16"><defs><linearGradient id="fl" x1="0" y1="0" x2="0" y2="1"><stop offset="0" stop-color="#f7ee98"/><stop offset=".55" stop-color="#ecd868"/><stop offset="1" stop-color="#d4b53a"/></linearGradient><linearGradient id="fr" x1="0" y1="0" x2="0" y2="1"><stop offset="0" stop-color="#eedb68"/><stop offset=".55" stop-color="#ecd970"/><stop offset="1" stop-color="#d8ba46"/></linearGradient></defs><path d="M6.6 0.8 L12.8 1 L12.8 7.5 L13.8 7.8 L13.8 14 L6.6 14.6 Z" fill="url(#fr)"/><path d="M1.4 1.2 L6.4 0.5 L7.4 1 L7.4 15 L5.6 15.8 L1.4 14.8 Z" fill="url(#fl)"/><path d="M6.7 1.2 L6.7 15" stroke="#c8a22e" stroke-width="1" opacity=".95"/><path d="M1.4 14.6 L5.6 15.6 L7.4 14.9" fill="none" stroke="#d9bb4a" stroke-width=".7"/></svg><div class="txt">System32</div>
  <div class="cbtn" style="left:740px"><svg width="16" height="14"><rect x="4" y="9" width="6" height="2" fill="#000"/></svg></div>
  <div class="cbtn" style="left:756px"><svg width="16" height="14"><rect x="3.5" y="3.5" width="8" height="7" fill="none" stroke="#000"/><rect x="3" y="2" width="9" height="2" fill="#000"/></svg></div>
  <div class="cbtn" style="left:774px"><svg width="16" height="14"><path d="M4 3 L11 10 M11 3 L4 10" stroke="#000" stroke-width="1.6"/></svg></div>
 </div>
 <div id="navbar"></div>
 <svg class="abs" style="left:6px;top:26.5px" width="74" height="30" viewBox="0 0 74 30">
<defs>
<linearGradient id="bk" x1="0" y1="0" x2="0" y2="1"><stop offset="0" stop-color="#7aa4c4"/><stop offset=".42" stop-color="#2c6a9a"/><stop offset=".52" stop-color="#0a62ac"/><stop offset=".8" stop-color="#0f94d4"/><stop offset="1" stop-color="#2cccf2"/></linearGradient>
<linearGradient id="fw" x1="0" y1="0" x2="0" y2="1"><stop offset="0" stop-color="#e0ddd6"/><stop offset=".5" stop-color="#c9c5bd"/><stop offset="1" stop-color="#dcd9d2"/></linearGradient>
</defs>
<circle cx="15.5" cy="15" r="12.8" fill="#d0dce8" stroke="#b4c4d6" stroke-width=".6"/>
<circle cx="15.5" cy="15" r="11.6" fill="url(#bk)" stroke="#1c4a78" stroke-width=".8"/>
<path d="M8.2 15 L14 9.6 L14 13.6 L21.4 13.6 L21.4 16.4 L14 16.4 L14 20.4 Z" fill="#fff" stroke="#e4f0fa" stroke-width=".4"/>
<circle cx="43.5" cy="15" r="12.2" fill="url(#fw)" stroke="#87837b" stroke-width="1.1"/>
<circle cx="43.5" cy="15" r="10.6" fill="none" stroke="#e6e3dd" stroke-width=".9"/>
<path d="M49.8 15 L43.8 9.4 L43.8 13.2 L37 13.2 L37 16.8 L43.8 16.8 L43.8 20.6 Z" fill="#d2cec6" stroke="#bcb8b0" stroke-width=".6"/>
<path d="M58 12.2 L66.4 12.2 L62.2 17.4 Z" fill="#fdfdfc" stroke="#9a968e" stroke-width=".9" stroke-linejoin="round"/>
</svg>
 <div id="addr"></div>
 <svg class="abs" style="left:80px;top:33px" width="16" height="16" viewBox="0 0 16 16"><defs><linearGradient id="fl" x1="0" y1="0" x2="0" y2="1"><stop offset="0" stop-color="#f7ee98"/><stop offset=".55" stop-color="#ecd868"/><stop offset="1" stop-color="#d4b53a"/></linearGradient><linearGradient id="fr" x1="0" y1="0" x2="0" y2="1"><stop offset="0" stop-color="#eedb68"/><stop offset=".55" stop-color="#ecd970"/><stop offset="1" stop-color="#d8ba46"/></linearGradient></defs><path d="M6.6 0.8 L12.8 1 L12.8 7.5 L13.8 7.8 L13.8 14 L6.6 14.6 Z" fill="url(#fr)"/><path d="M1.4 1.2 L6.4 0.5 L7.4 1 L7.4 15 L5.6 15.8 L1.4 14.8 Z" fill="url(#fl)"/><path d="M6.7 1.2 L6.7 15" stroke="#c8a22e" stroke-width="1" opacity=".95"/><path d="M1.4 14.6 L5.6 15.6 L7.4 14.9" fill="none" stroke="#d9bb4a" stroke-width=".7"/></svg><div class="t" style="left:114px;top:34px">Computer</div><div class="t" style="left:177.29999999999995px;top:34px">Local Disk (C:)</div><div class="t" style="left:262.6px;top:34px">Windows</div><div class="t" style="left:322.6px;top:34px">System32</div><svg class="abs" style="left:102.5px;top:39px" width="5" height="3"><path d="M0 0 L5 0 L2.5 3 Z" fill="#000"/></svg><svg class="abs" style="left:166.5px;top:39px" width="5" height="3"><path d="M0 0 L5 0 L2.5 3 Z" fill="#000"/></svg><svg class="abs" style="left:252.0px;top:39px" width="5" height="3"><path d="M0 0 L5 0 L2.5 3 Z" fill="#000"/></svg><svg class="abs" style="left:311.5px;top:39px" width="5" height="3"><path d="M0 0 L5 0 L2.5 3 Z" fill="#000"/></svg><svg class="abs" style="left:376.0px;top:39px" width="5" height="3"><path d="M0 0 L5 0 L2.5 3 Z" fill="#000"/></svg><svg class="abs" style="left:505.5px;top:39px" width="8" height="4"><path d="M0 0 L8 0 L4.0 4 Z" fill="#000"/></svg>
 <div id="search"></div>
 <div class="t" style="left:558px;top:35px">Search System32</div>
 <svg class="abs" style="left:524px;top:31px" width="21" height="20" viewBox="0 0 21 20">
<defs><linearGradient id="rg" x1="0" y1="0" x2="0" y2="1"><stop offset="0" stop-color="#58c050"/><stop offset=".5" stop-color="#2ea32c"/><stop offset="1" stop-color="#1f9a1e"/></linearGradient></defs>
<rect x=".5" y=".5" width="20" height="19" rx="1.5" fill="url(#rg)" stroke="#8fd48a" stroke-width="1"/>
<rect x="1.5" y="1.5" width="18" height="17" rx="1" fill="none" stroke="#228a22" stroke-width=".8"/>
<path d="M4 9.4 L7.6 4.4 L9.6 6.2 L8.2 8.2 L10.4 10 L6.4 11.6 Z" fill="#e8f7e4"/>
<path d="M17 10.4 L13.4 15.6 L11.4 13.8 L12.8 11.8 L10.6 10 L14.6 8.4 Z" fill="#e8f7e4" transform="translate(0,-1.2)"/>
</svg>
<svg class="abs" style="left:773px;top:31px" width="21" height="21" viewBox="0 0 21 21">
<defs><linearGradient id="sg" x1="0" y1="0" x2="0" y2="1"><stop offset="0" stop-color="#6f86e0"/><stop offset=".45" stop-color="#1f3fc0"/><stop offset=".75" stop-color="#1f74d0"/><stop offset="1" stop-color="#2fb4d8"/></linearGradient></defs>
<rect x=".5" y=".5" width="20" height="20" rx="2" fill="url(#sg)" stroke="#9fb0e8" stroke-width="1"/>
<circle cx="12.4" cy="8" r="3.4" fill="#16309c" stroke="#fff" stroke-width="1.8"/>
<path d="M9.8 10.8 L5 15.6" stroke="#fff" stroke-width="2.2" stroke-linecap="round"/>
</svg>
 <div class="t" style="left:16.399999999999977px;top:68px">Organize</div><svg class="abs" style="left:68.5px;top:72px" width="7" height="4"><path d="M0 0 L7 0 L3.5 4 Z" fill="#000"/></svg><div class="t" style="left:95.5px;top:68px">Include in library</div><svg class="abs" style="left:183px;top:72px" width="7" height="4"><path d="M0 0 L7 0 L3.5 4 Z" fill="#000"/></svg><div class="t" style="left:210.5px;top:68px">Share with</div><svg class="abs" style="left:269.5px;top:72px" width="7" height="4"><path d="M0 0 L7 0 L3.5 4 Z" fill="#000"/></svg><div class="t" style="left:297.5px;top:68px">New folder</div><svg class="abs" style="left:685px;top:66px" width="18" height="16" viewBox="0 0 18 16">
<g fill="#fff" stroke="#8a8f98" stroke-width=".8"><rect x="1.5" y="1.5" width="3" height="3"/><rect x="1.5" y="6.2" width="3" height="3"/><rect x="1.5" y="10.9" width="3" height="3"/></g>
<path d="M7 3 H10.4 M12 3 H15.6 M7 7.7 H10.4 M12 7.7 H15.6 M7 12.4 H10.4 M12 12.4 H15.6" stroke="#7d828c" stroke-width="1.1"/></svg>
<svg class="abs" style="left:714.5px;top:72px" width="8" height="4"><path d="M0 0 L8 0 L4 4 Z" fill="#000"/></svg>
<svg class="abs" style="left:736px;top:66px" width="18" height="16" viewBox="0 0 18 16">
<rect x="1.5" y="1.5" width="14.5" height="12.5" fill="#f4f8fc" stroke="#8aa0b8" stroke-width="1"/>
<rect x="1.5" y="1.5" width="14.5" height="2.2" fill="#dfe9f3"/>
<rect x="10.4" y="2" width="5.2" height="11.6" fill="#5bb8c8"/><rect x="11.4" y="5" width="3.2" height="8.2" fill="#8fd6de"/>
</svg>
<svg class="abs" style="left:763px;top:64px" width="20" height="20" viewBox="0 0 20 20">
<defs><radialGradient id="hp" cx=".5" cy=".3" r=".8"><stop offset="0" stop-color="#5c86e0"/><stop offset=".6" stop-color="#2848b4"/><stop offset="1" stop-color="#1c3494"/></radialGradient></defs>
<circle cx="10" cy="10" r="8.4" fill="#c9d3ea" stroke="#aab4cc" stroke-width=".8"/>
<circle cx="10" cy="10" r="7" fill="url(#hp)" stroke="#22358c" stroke-width=".7"/>
<text x="10" y="14.2" text-anchor="middle" font-family="Liberation Sans, sans-serif" font-weight="bold" font-size="12" fill="#fff">?</text>
</svg>
 <div id="navpane"><svg class="abs" style="left:20px;top:10px" width="16" height="16" viewBox="0 0 16 16"><path d="M8 0.8 L10.2 5.6 L15.4 6.1 L11.5 9.6 L12.7 14.8 L8 12 L3.3 14.8 L4.5 9.6 L0.6 6.1 L5.8 5.6 Z" fill="#f6b73c" stroke="#d88a1a" stroke-width=".8"/><path d="M8 3.4 L9.4 6.6 L12.6 7 L10.2 9.2 L10.9 12.2 L8 10.5 L5.1 12.2 L5.8 9.2 L3.4 7 L6.6 6.6 Z" fill="#fbe082"/></svg><div class="t" style="left:39.5px;top:13px">Favorites</div>
<svg class="abs" style="left:30px;top:29px" width="16" height="16" viewBox="0 0 16 16"><rect x="0.5" y="2.5" width="15" height="11" fill="#2a5fc0" stroke="#16305f"/><rect x="1.5" y="3.5" width="13" height="8" fill="#3f86e0"/><rect x="1" y="11.5" width="14" height="2" fill="#16305f"/><rect x="2" y="12" width="2" height="1" fill="#7bd34a"/><path d="M1.5 3.5 L14.5 3.5 L14.5 6 Q8 5 1.5 9 Z" fill="#6ea8ee" opacity=".7"/></svg><div class="t" style="left:49.5px;top:32px">Desktop</div>
<svg class="abs" style="left:30px;top:48px" width="16" height="16" viewBox="0 0 16 16"><path d="M1 2 L6 0.6 L6.8 1.2 L6.8 13 L5 14 L1 13 Z" fill="#f0dc78"/><path d="M6.8 1.2 L11.4 1.4 L11.4 12.4 L6.8 13 Z" fill="#f5e890"/><path d="M6.4 1.4 L6.4 13.2" stroke="#d4b03c" stroke-width=".8"/><path d="M9.6 6.5 L13 6.5 L13 10.5 L15.6 10.5 L11.3 15.6 L7 10.5 L9.6 10.5 Z" fill="#2f8fe8" stroke="#1565b8" stroke-width=".7"/></svg><div class="t" style="left:49.5px;top:51px">Downloads</div>
<svg class="abs" style="left:30px;top:67px" width="16" height="16" viewBox="0 0 16 16"><rect x="4.5" y="3.5" width="10" height="10" fill="#eef1f5" stroke="#8a97a8"/><path d="M6 6.5 H13 M6 8.5 H13 M6 10.5 H13 M9.5 5 V12" stroke="#a9b6c8" stroke-width=".9"/><circle cx="4" cy="4" r="3.2" fill="#fff" stroke="#7d8898" stroke-width=".9"/><path d="M4 2.3 V4 H5.4" stroke="#55606e" stroke-width=".8" fill="none"/><rect x="2.5" y="13.5" width="12" height="2" fill="#9aa6b4" stroke="#6f7b89" stroke-width=".6"/></svg><div class="t" style="left:49.5px;top:70px">Recent Places</div>
<svg class="abs" style="left:20px;top:105px" width="16" height="16" viewBox="0 0 16 16"><path d="M1 4 L1 2.6 L6 2.6 L7 3.6 L14.6 3.6 L14.6 6 Z" fill="#f3dc7a" stroke="#c9a840" stroke-width=".6"/><path d="M0.6 5.6 L15.4 5.6 L14.6 14.6 L1.4 14.6 Z" fill="#f4e28c" stroke="#c9a840" stroke-width=".6"/><rect x="3.2" y="8.2" width="9.6" height="6.4" fill="#4a97dc" stroke="#2b6cb0" stroke-width=".6"/><rect x="4.6" y="10.4" width="6.8" height="4.2" fill="#dbeaf8"/><path d="M1 6.4 L15 6.4" stroke="#fbf3bd" stroke-width=".8"/></svg><div class="t" style="left:39.5px;top:108px">Libraries</div>
<svg class="abs" style="left:30px;top:124px" width="16" height="16" viewBox="0 0 16 16"><path d="M2.5 0.8 L10.5 0.8 L13.5 3.8 L13.5 15.2 L2.5 15.2 Z" fill="#fdfdfe" stroke="#8c97a6" stroke-width=".9"/><path d="M10.5 0.8 L10.5 3.8 L13.5 3.8" fill="#d8dee6" stroke="#8c97a6" stroke-width=".7"/><path d="M4.5 4.5 H9 M4.5 6.5 H7 M4.5 8.5 H7 M4.5 10.5 H11.5 M4.5 12.5 H11.5" stroke="#9fb1c8" stroke-width=".9"/><rect x="8" y="5.6" width="3.8" height="3.6" fill="#3e78c8"/></svg><div class="t" style="left:49.5px;top:127px">Documents</div>
<svg class="abs" style="left:30px;top:143px" width="16" height="16" viewBox="0 0 16 16"><path d="M8.2 1 C10.4 2 12.6 3.4 12.2 7.2 C11.8 5.4 10.6 4.6 9.4 4.4 L9.4 11.8 C9.4 14.2 6.8 15.6 4.6 15 C2.6 14.4 2.4 12.2 4.2 11 C5.6 10.1 7.2 10.2 8.2 10.8 Z" fill="#2f8de6" stroke="#1a5fb0" stroke-width=".7"/><ellipse cx="5.6" cy="12.6" rx="1.8" ry="1.1" fill="#8cc8f8" opacity=".8"/></svg><div class="t" style="left:49.5px;top:146px">Music</div>
<svg class="abs" style="left:30px;top:162px" width="16" height="16" viewBox="0 0 16 16"><rect x="0.6" y="2.6" width="14.8" height="11.4" fill="#f4f6f8" stroke="#7b8796" stroke-width=".9"/><rect x="2" y="4" width="12" height="8.6" fill="#7fc0f0"/><path d="M2 12.6 L2 10 Q5 7.5 8 9.6 Q11 8 14 9.4 L14 12.6 Z" fill="#4d9a4a"/><path d="M2 10.8 Q6 9.6 9 10.6 Q12 11.4 14 10.8 L14 12.6 L2 12.6 Z" fill="#2c6e3a"/><path d="M2 4 H14 V6 Q8 5.2 2 7.4 Z" fill="#b9e0fa"/></svg><div class="t" style="left:49.5px;top:165px">Pictures</div>
<svg class="abs" style="left:30px;top:181px" width="16" height="16" viewBox="0 0 16 16"><rect x="1" y="0.8" width="14" height="14.4" fill="#2b2f36" stroke="#15181c" stroke-width=".6"/><rect x="4" y="1.8" width="8" height="5.6" fill="#5aa0e6"/><rect x="4" y="8.6" width="8" height="5.6" fill="#6cbb6a"/><path d="M4 4.8 Q8 3 12 5 L12 7.4 L4 7.4 Z" fill="#3a77c4"/><g fill="#e8ecf0"><rect x="1.8" y="1.8" width="1.4" height="1.6"/><rect x="1.8" y="4.6" width="1.4" height="1.6"/><rect x="1.8" y="7.4" width="1.4" height="1.6"/><rect x="1.8" y="10.2" width="1.4" height="1.6"/><rect x="1.8" y="13" width="1.4" height="1.6"/><rect x="12.8" y="1.8" width="1.4" height="1.6"/><rect x="12.8" y="4.6" width="1.4" height="1.6"/><rect x="12.8" y="7.4" width="1.4" height="1.6"/><rect x="12.8" y="10.2" width="1.4" height="1.6"/><rect x="12.8" y="13" width="1.4" height="1.6"/></g></svg><div class="t" style="left:49.5px;top:184px">Videos</div>
<svg class="abs" style="left:20px;top:219px" width="16" height="16" viewBox="0 0 16 16"><rect x="0.8" y="4" width="2.2" height="9.6" fill="#9fb2cc" stroke="#5d6f8a" stroke-width=".6"/><rect x="3.8" y="1" width="11.4" height="9" fill="#c9d4e2" stroke="#4c5a70" stroke-width=".8"/><rect x="5" y="2.2" width="9" height="6.6" fill="#1d3fc4"/><path d="M5 2.2 H14 V4.4 Q9 4 5 7 Z" fill="#4f86ee" opacity=".85"/><rect x="8.2" y="10" width="2.6" height="2" fill="#8b99ad"/><path d="M5.6 13.8 Q9.5 11.4 13.4 13.8 Z" fill="#b5c0d0" stroke="#6a788c" stroke-width=".5"/></svg><div class="t" style="left:39.5px;top:222px">Computer</div>
<div class="abs" style="left:1px;top:237px;width:156px;height:19px;background:#d4d0c8"></div><svg class="abs" style="left:30px;top:238px" width="16" height="16" viewBox="0 0 16 16"><path d="M1 10.2 L15 10.2 L15 14.6 L1 14.6 Z" fill="#4c7a8e" stroke="#2d4d5c" stroke-width=".7"/><path d="M1 10.2 L3.4 8 L12.6 8 L15 10.2 Z" fill="#b9c6cf" stroke="#6e7f8a" stroke-width=".6"/><rect x="2.4" y="12" width="7" height="1.4" fill="#86e07a"/><rect x="11.6" y="11.8" width="2" height="1.6" fill="#d8e4ea"/><path d="M3.8 1.6 Q5.4 0.6 7.4 1.6 L6.8 4.6 Q5.2 3.8 3.4 4.6 Z" fill="#e8542c"/><path d="M8 1.8 Q9.8 2.8 11.6 1.6 L11 4.6 Q9.2 5.6 7.4 4.8 Z" fill="#7cc242"/><path d="M3.2 5.4 Q5 4.4 6.6 5.4 L6 8.4 Q4.4 7.6 2.6 8.4 Z" fill="#3a8be0"/><path d="M7.2 5.6 Q9 6.6 10.8 5.4 L10.2 8.4 Q8.4 9.4 6.6 8.6 Z" fill="#f6c12c"/></svg><div class="t" style="left:49.5px;top:241px">Local Disk (C:)</div>
<svg class="abs" style="left:20px;top:276px" width="16" height="16" viewBox="0 0 16 16"><circle cx="5.6" cy="5.8" r="5" fill="#3aa0dc" stroke="#1f6aa8" stroke-width=".7"/><path d="M2.4 3.4 Q4.4 1.4 6.4 2.4 Q7.4 4 5.4 5 Q3.4 6.4 4 8.4 Q2.4 8 1.4 6 Z" fill="#5fc45a"/><path d="M7.4 6.4 Q9.6 5.6 10 7.6 Q9 9.8 7.4 9.6 Z" fill="#5fc45a"/><rect x="6.6" y="5.6" width="9" height="7" fill="#c8d2e0" stroke="#46546a" stroke-width=".8"/><rect x="7.6" y="6.6" width="7" height="5" fill="#1b3ed0"/><path d="M7.6 6.6 H14.6 V8 Q10.6 8 7.6 10.2 Z" fill="#4f86ee" opacity=".85"/><rect x="10" y="12.6" width="2.2" height="1.6" fill="#7c899c"/><rect x="8.4" y="14.2" width="5.4" height="1.2" fill="#9aa6b8"/></svg><div class="t" style="left:39.5px;top:279px">Network</div>
</div>
 <div id="list">
  <div class="row" style="top:17px"><svg class="abs" style="left:18px;top:2px" width="16" height="16" viewBox="0 0 16 16"><defs><linearGradient id="fl" x1="0" y1="0" x2="0" y2="1"><stop offset="0" stop-color="#f7ee98"/><stop offset=".55" stop-color="#ecd868"/><stop offset="1" stop-color="#d4b53a"/></linearGradient><linearGradient id="fr" x1="0" y1="0" x2="0" y2="1"><stop offset="0" stop-color="#eedb68"/><stop offset=".55" stop-color="#ecd970"/><stop offset="1" stop-color="#d8ba46"/></linearGradient></defs><path d="M6.6 0.8 L12.8 1 L12.8 7.5 L13.8 7.8 L13.8 14 L6.6 14.6 Z" fill="url(#fr)"/><path d="M1.4 1.2 L6.4 0.5 L7.4 1 L7.4 15 L5.6 15.8 L1.4 14.8 Z" fill="url(#fl)"/><path d="M6.7 1.2 L6.7 15" stroke="#c8a22e" stroke-width="1" opacity=".95"/><path d="M1.4 14.6 L5.6 15.6 L7.4 14.9" fill="none" stroke="#d9bb4a" stroke-width=".7"/></svg><div class="t" style="left:36.5px;top:5px">ias</div><div class="t" style="left:276.5px;top:5px;letter-spacing:0">7/14/2009 3:37 AM</div><div class="t" style="left:396.5px;top:5px">File folder</div></div>
<div class="row" style="top:39px"><svg class="abs" style="left:18px;top:2px" width="16" height="16" viewBox="0 0 16 16"><defs><linearGradient id="fl" x1="0" y1="0" x2="0" y2="1"><stop offset="0" stop-color="#f7ee98"/><stop offset=".55" stop-color="#ecd868"/><stop offset="1" stop-color="#d4b53a"/></linearGradient><linearGradient id="fr" x1="0" y1="0" x2="0" y2="1"><stop offset="0" stop-color="#eedb68"/><stop offset=".55" stop-color="#ecd970"/><stop offset="1" stop-color="#d8ba46"/></linearGradient></defs><path d="M6.6 0.8 L12.8 1 L12.8 7.5 L13.8 7.8 L13.8 14 L6.6 14.6 Z" fill="url(#fr)"/><path d="M1.4 1.2 L6.4 0.5 L7.4 1 L7.4 15 L5.6 15.8 L1.4 14.8 Z" fill="url(#fl)"/><path d="M6.7 1.2 L6.7 15" stroke="#c8a22e" stroke-width="1" opacity=".95"/><path d="M1.4 14.6 L5.6 15.6 L7.4 14.9" fill="none" stroke="#d9bb4a" stroke-width=".7"/></svg><div class="t" style="left:36.5px;top:5px">icsxml</div><div class="t" style="left:276.5px;top:5px;letter-spacing:0">7/14/2009 3:37 AM</div><div class="t" style="left:396.5px;top:5px">File folder</div></div>
<div class="row" style="top:61px"><svg class="abs" style="left:18px;top:2px" width="16" height="16" viewBox="0 0 16 16"><defs><linearGradient id="fl" x1="0" y1="0" x2="0" y2="1"><stop offset="0" stop-color="#f7ee98"/><stop offset=".55" stop-color="#ecd868"/><stop offset="1" stop-color="#d4b53a"/></linearGradient><linearGradient id="fr" x1="0" y1="0" x2="0" y2="1"><stop offset="0" stop-color="#eedb68"/><stop offset=".55" stop-color="#ecd970"/><stop offset="1" stop-color="#d8ba46"/></linearGradient></defs><path d="M6.6 0.8 L12.8 1 L12.8 7.5 L13.8 7.8 L13.8 14 L6.6 14.6 Z" fill="url(#fr)"/><path d="M1.4 1.2 L6.4 0.5 L7.4 1 L7.4 15 L5.6 15.8 L1.4 14.8 Z" fill="url(#fl)"/><path d="M6.7 1.2 L6.7 15" stroke="#c8a22e" stroke-width="1" opacity=".95"/><path d="M1.4 14.6 L5.6 15.6 L7.4 14.9" fill="none" stroke="#d9bb4a" stroke-width=".7"/></svg><div class="t" style="left:36.5px;top:5px">IME</div><div class="t" style="left:276.5px;top:5px;letter-spacing:0">7/14/2009 3:37 AM</div><div class="t" style="left:396.5px;top:5px">File folder</div></div>
<div class="row" style="top:83px"><svg class="abs" style="left:18px;top:2px" width="16" height="16" viewBox="0 0 16 16"><defs><linearGradient id="fl" x1="0" y1="0" x2="0" y2="1"><stop offset="0" stop-color="#f7ee98"/><stop offset=".55" stop-color="#ecd868"/><stop offset="1" stop-color="#d4b53a"/></linearGradient><linearGradient id="fr" x1="0" y1="0" x2="0" y2="1"><stop offset="0" stop-color="#eedb68"/><stop offset=".55" stop-color="#ecd970"/><stop offset="1" stop-color="#d8ba46"/></linearGradient></defs><path d="M6.6 0.8 L12.8 1 L12.8 7.5 L13.8 7.8 L13.8 14 L6.6 14.6 Z" fill="url(#fr)"/><path d="M1.4 1.2 L6.4 0.5 L7.4 1 L7.4 15 L5.6 15.8 L1.4 14.8 Z" fill="url(#fl)"/><path d="M6.7 1.2 L6.7 15" stroke="#c8a22e" stroke-width="1" opacity=".95"/><path d="M1.4 14.6 L5.6 15.6 L7.4 14.9" fill="none" stroke="#d9bb4a" stroke-width=".7"/></svg><div class="t" style="left:36.5px;top:5px">inetsrv</div><div class="t" style="left:276.5px;top:5px;letter-spacing:0">7/14/2009 3:05 AM</div><div class="t" style="left:396.5px;top:5px">File folder</div></div>
<div class="row" style="top:105px"><svg class="abs" style="left:18px;top:2px" width="16" height="16" viewBox="0 0 16 16"><defs><linearGradient id="fl" x1="0" y1="0" x2="0" y2="1"><stop offset="0" stop-color="#f7ee98"/><stop offset=".55" stop-color="#ecd868"/><stop offset="1" stop-color="#d4b53a"/></linearGradient><linearGradient id="fr" x1="0" y1="0" x2="0" y2="1"><stop offset="0" stop-color="#eedb68"/><stop offset=".55" stop-color="#ecd970"/><stop offset="1" stop-color="#d8ba46"/></linearGradient></defs><path d="M6.6 0.8 L12.8 1 L12.8 7.5 L13.8 7.8 L13.8 14 L6.6 14.6 Z" fill="url(#fr)"/><path d="M1.4 1.2 L6.4 0.5 L7.4 1 L7.4 15 L5.6 15.8 L1.4 14.8 Z" fill="url(#fl)"/><path d="M6.7 1.2 L6.7 15" stroke="#c8a22e" stroke-width="1" opacity=".95"/><path d="M1.4 14.6 L5.6 15.6 L7.4 14.9" fill="none" stroke="#d9bb4a" stroke-width=".7"/></svg><div class="t" style="left:36.5px;top:5px">it-IT</div><div class="t" style="left:276.5px;top:5px;letter-spacing:0">9/23/2019 2:00 PM</div><div class="t" style="left:396.5px;top:5px">File folder</div></div>
<div class="row" style="top:127px"><svg class="abs" style="left:18px;top:2px" width="16" height="16" viewBox="0 0 16 16"><defs><linearGradient id="fl" x1="0" y1="0" x2="0" y2="1"><stop offset="0" stop-color="#f7ee98"/><stop offset=".55" stop-color="#ecd868"/><stop offset="1" stop-color="#d4b53a"/></linearGradient><linearGradient id="fr" x1="0" y1="0" x2="0" y2="1"><stop offset="0" stop-color="#eedb68"/><stop offset=".55" stop-color="#ecd970"/><stop offset="1" stop-color="#d8ba46"/></linearGradient></defs><path d="M6.6 0.8 L12.8 1 L12.8 7.5 L13.8 7.8 L13.8 14 L6.6 14.6 Z" fill="url(#fr)"/><path d="M1.4 1.2 L6.4 0.5 L7.4 1 L7.4 15 L5.6 15.8 L1.4 14.8 Z" fill="url(#fl)"/><path d="M6.7 1.2 L6.7 15" stroke="#c8a22e" stroke-width="1" opacity=".95"/><path d="M1.4 14.6 L5.6 15.6 L7.4 14.9" fill="none" stroke="#d9bb4a" stroke-width=".7"/></svg><div class="t" style="left:36.5px;top:5px">ja-JP</div><div class="t" style="left:276.5px;top:5px;letter-spacing:0">9/23/2019 2:00 PM</div><div class="t" style="left:396.5px;top:5px">File folder</div></div>
<div class="row" style="top:149px"><svg class="abs" style="left:18px;top:2px" width="16" height="16" viewBox="0 0 16 16"><defs><linearGradient id="fl" x1="0" y1="0" x2="0" y2="1"><stop offset="0" stop-color="#f7ee98"/><stop offset=".55" stop-color="#ecd868"/><stop offset="1" stop-color="#d4b53a"/></linearGradient><linearGradient id="fr" x1="0" y1="0" x2="0" y2="1"><stop offset="0" stop-color="#eedb68"/><stop offset=".55" stop-color="#ecd970"/><stop offset="1" stop-color="#d8ba46"/></linearGradient></defs><path d="M6.6 0.8 L12.8 1 L12.8 7.5 L13.8 7.8 L13.8 14 L6.6 14.6 Z" fill="url(#fr)"/><path d="M1.4 1.2 L6.4 0.5 L7.4 1 L7.4 15 L5.6 15.8 L1.4 14.8 Z" fill="url(#fl)"/><path d="M6.7 1.2 L6.7 15" stroke="#c8a22e" stroke-width="1" opacity=".95"/><path d="M1.4 14.6 L5.6 15.6 L7.4 14.9" fill="none" stroke="#d9bb4a" stroke-width=".7"/></svg><div class="t" style="left:36.5px;top:5px">ko-KR</div><div class="t" style="left:276.5px;top:5px;letter-spacing:0">9/23/2019 2:00 PM</div><div class="t" style="left:396.5px;top:5px">File folder</div></div>
<div class="row" style="top:171px"><svg class="abs" style="left:18px;top:2px" width="16" height="16" viewBox="0 0 16 16"><defs><linearGradient id="fl" x1="0" y1="0" x2="0" y2="1"><stop offset="0" stop-color="#f7ee98"/><stop offset=".55" stop-color="#ecd868"/><stop offset="1" stop-color="#d4b53a"/></linearGradient><linearGradient id="fr" x1="0" y1="0" x2="0" y2="1"><stop offset="0" stop-color="#eedb68"/><stop offset=".55" stop-color="#ecd970"/><stop offset="1" stop-color="#d8ba46"/></linearGradient></defs><path d="M6.6 0.8 L12.8 1 L12.8 7.5 L13.8 7.8 L13.8 14 L6.6 14.6 Z" fill="url(#fr)"/><path d="M1.4 1.2 L6.4 0.5 L7.4 1 L7.4 15 L5.6 15.8 L1.4 14.8 Z" fill="url(#fl)"/><path d="M6.7 1.2 L6.7 15" stroke="#c8a22e" stroke-width="1" opacity=".95"/><path d="M1.4 14.6 L5.6 15.6 L7.4 14.9" fill="none" stroke="#d9bb4a" stroke-width=".7"/></svg><div class="t" style="left:36.5px;top:5px">LogFiles</div><div class="t" style="left:276.5px;top:5px;letter-spacing:0">3/2/2018 9:52 AM</div><div class="t" style="left:396.5px;top:5px">File folder</div></div>
<div class="row" style="top:193px"><svg class="abs" style="left:18px;top:2px" width="16" height="16" viewBox="0 0 16 16"><defs><linearGradient id="fl" x1="0" y1="0" x2="0" y2="1"><stop offset="0" stop-color="#f7ee98"/><stop offset=".55" stop-color="#ecd868"/><stop offset="1" stop-color="#d4b53a"/></linearGradient><linearGradient id="fr" x1="0" y1="0" x2="0" y2="1"><stop offset="0" stop-color="#eedb68"/><stop offset=".55" stop-color="#ecd970"/><stop offset="1" stop-color="#d8ba46"/></linearGradient></defs><path d="M6.6 0.8 L12.8 1 L12.8 7.5 L13.8 7.8 L13.8 14 L6.6 14.6 Z" fill="url(#fr)"/><path d="M1.4 1.2 L6.4 0.5 L7.4 1 L7.4 15 L5.6 15.8 L1.4 14.8 Z" fill="url(#fl)"/><path d="M6.7 1.2 L6.7 15" stroke="#c8a22e" stroke-width="1" opacity=".95"/><path d="M1.4 14.6 L5.6 15.6 L7.4 14.9" fill="none" stroke="#d9bb4a" stroke-width=".7"/></svg><div class="t" style="left:36.5px;top:5px">lt-LT</div><div class="t" style="left:276.5px;top:5px;letter-spacing:0">7/14/2009 3:37 AM</div><div class="t" style="left:396.5px;top:5px">File folder</div></div>
<div class="row" style="top:215px"><svg class="abs" style="left:18px;top:2px" width="16" height="16" viewBox="0 0 16 16"><defs><linearGradient id="fl" x1="0" y1="0" x2="0" y2="1"><stop offset="0" stop-color="#f7ee98"/><stop offset=".55" stop-color="#ecd868"/><stop offset="1" stop-color="#d4b53a"/></linearGradient><linearGradient id="fr" x1="0" y1="0" x2="0" y2="1"><stop offset="0" stop-color="#eedb68"/><stop offset=".55" stop-color="#ecd970"/><stop offset="1" stop-color="#d8ba46"/></linearGradient></defs><path d="M6.6 0.8 L12.8 1 L12.8 7.5 L13.8 7.8 L13.8 14 L6.6 14.6 Z" fill="url(#fr)"/><path d="M1.4 1.2 L6.4 0.5 L7.4 1 L7.4 15 L5.6 15.8 L1.4 14.8 Z" fill="url(#fl)"/><path d="M6.7 1.2 L6.7 15" stroke="#c8a22e" stroke-width="1" opacity=".95"/><path d="M1.4 14.6 L5.6 15.6 L7.4 14.9" fill="none" stroke="#d9bb4a" stroke-width=".7"/></svg><div class="t" style="left:36.5px;top:5px">lv-LV</div><div class="t" style="left:276.5px;top:5px;letter-spacing:0">7/14/2009 3:37 AM</div><div class="t" style="left:396.5px;top:5px">File folder</div></div>
<div class="row" style="top:237px"><svg class="abs" style="left:18px;top:2px" width="16" height="16" viewBox="0 0 16 16"><defs><linearGradient id="fl" x1="0" y1="0" x2="0" y2="1"><stop offset="0" stop-color="#f7ee98"/><stop offset=".55" stop-color="#ecd868"/><stop offset="1" stop-color="#d4b53a"/></linearGradient><linearGradient id="fr" x1="0" y1="0" x2="0" y2="1"><stop offset="0" stop-color="#eedb68"/><stop offset=".55" stop-color="#ecd970"/><stop offset="1" stop-color="#d8ba46"/></linearGradient></defs><path d="M6.6 0.8 L12.8 1 L12.8 7.5 L13.8 7.8 L13.8 14 L6.6 14.6 Z" fill="url(#fr)"/><path d="M1.4 1.2 L6.4 0.5 L7.4 1 L7.4 15 L5.6 15.8 L1.4 14.8 Z" fill="url(#fl)"/><path d="M6.7 1.2 L6.7 15" stroke="#c8a22e" stroke-width="1" opacity=".95"/><path d="M1.4 14.6 L5.6 15.6 L7.4 14.9" fill="none" stroke="#d9bb4a" stroke-width=".7"/></svg><div class="t" style="left:36.5px;top:5px">Macromed</div><div class="t" style="left:276.5px;top:5px;letter-spacing:0">11/3/2020 1:19 AM</div><div class="t" style="left:396.5px;top:5px">File folder</div></div>
<div class="row" style="top:259px"><svg class="abs" style="left:18px;top:2px" width="16" height="16" viewBox="0 0 16 16"><defs><linearGradient id="fl" x1="0" y1="0" x2="0" y2="1"><stop offset="0" stop-color="#f7ee98"/><stop offset=".55" stop-color="#ecd868"/><stop offset="1" stop-color="#d4b53a"/></linearGradient><linearGradient id="fr" x1="0" y1="0" x2="0" y2="1"><stop offset="0" stop-color="#eedb68"/><stop offset=".55" stop-color="#ecd970"/><stop offset="1" stop-color="#d8ba46"/></linearGradient></defs><path d="M6.6 0.8 L12.8 1 L12.8 7.5 L13.8 7.8 L13.8 14 L6.6 14.6 Z" fill="url(#fr)"/><path d="M1.4 1.2 L6.4 0.5 L7.4 1 L7.4 15 L5.6 15.8 L1.4 14.8 Z" fill="url(#fl)"/><path d="M6.7 1.2 L6.7 15" stroke="#c8a22e" stroke-width="1" opacity=".95"/><path d="M1.4 14.6 L5.6 15.6 L7.4 14.9" fill="none" stroke="#d9bb4a" stroke-width=".7"/></svg><div class="t" style="left:36.5px;top:5px">manifeststore</div><div class="t" style="left:276.5px;top:5px;letter-spacing:0">11/20/2010 9:33 PM</div><div class="t" style="left:396.5px;top:5px">File folder</div></div>
<div class="row" style="top:281px"><svg class="abs" style="left:18px;top:2px" width="16" height="16" viewBox="0 0 16 16"><defs><linearGradient id="fl" x1="0" y1="0" x2="0" y2="1"><stop offset="0" stop-color="#f7ee98"/><stop offset=".55" stop-color="#ecd868"/><stop offset="1" stop-color="#d4b53a"/></linearGradient><linearGradient id="fr" x1="0" y1="0" x2="0" y2="1"><stop offset="0" stop-color="#eedb68"/><stop offset=".55" stop-color="#ecd970"/><stop offset="1" stop-color="#d8ba46"/></linearGradient></defs><path d="M6.6 0.8 L12.8 1 L12.8 7.5 L13.8 7.8 L13.8 14 L6.6 14.6 Z" fill="url(#fr)"/><path d="M1.4 1.2 L6.4 0.5 L7.4 1 L7.4 15 L5.6 15.8 L1.4 14.8 Z" fill="url(#fl)"/><path d="M6.7 1.2 L6.7 15" stroke="#c8a22e" stroke-width="1" opacity=".95"/><path d="M1.4 14.6 L5.6 15.6 L7.4 14.9" fill="none" stroke="#d9bb4a" stroke-width=".7"/></svg><div class="t" style="left:36.5px;top:5px">Microsoft</div><div class="t" style="left:276.5px;top:5px;letter-spacing:0">7/14/2009 5:34 AM</div><div class="t" style="left:396.5px;top:5px">File folder</div></div>
<div class="row" style="top:303px"><svg class="abs" style="left:18px;top:2px" width="16" height="16" viewBox="0 0 16 16"><defs><linearGradient id="fl" x1="0" y1="0" x2="0" y2="1"><stop offset="0" stop-color="#f7ee98"/><stop offset=".55" stop-color="#ecd868"/><stop offset="1" stop-color="#d4b53a"/></linearGradient><linearGradient id="fr" x1="0" y1="0" x2="0" y2="1"><stop offset="0" stop-color="#eedb68"/><stop offset=".55" stop-color="#ecd970"/><stop offset="1" stop-color="#d8ba46"/></linearGradient></defs><path d="M6.6 0.8 L12.8 1 L12.8 7.5 L13.8 7.8 L13.8 14 L6.6 14.6 Z" fill="url(#fr)"/><path d="M1.4 1.2 L6.4 0.5 L7.4 1 L7.4 15 L5.6 15.8 L1.4 14.8 Z" fill="url(#fl)"/><path d="M6.7 1.2 L6.7 15" stroke="#c8a22e" stroke-width="1" opacity=".95"/><path d="M1.4 14.6 L5.6 15.6 L7.4 14.9" fill="none" stroke="#d9bb4a" stroke-width=".7"/></svg><div class="t" style="left:36.5px;top:5px">migration</div><div class="t" style="left:276.5px;top:5px;letter-spacing:0">11/2/2020 9:20 AM</div><div class="t" style="left:396.5px;top:5px">File folder</div></div>
<div class="row" style="top:325px"><svg class="abs" style="left:18px;top:2px" width="16" height="16" viewBox="0 0 16 16"><defs><linearGradient id="fl" x1="0" y1="0" x2="0" y2="1"><stop offset="0" stop-color="#f7ee98"/><stop offset=".55" stop-color="#ecd868"/><stop offset="1" stop-color="#d4b53a"/></linearGradient><linearGradient id="fr" x1="0" y1="0" x2="0" y2="1"><stop offset="0" stop-color="#eedb68"/><stop offset=".55" stop-color="#ecd970"/><stop offset="1" stop-color="#d8ba46"/></linearGradient></defs><path d="M6.6 0.8 L12.8 1 L12.8 7.5 L13.8 7.8 L13.8 14 L6.6 14.6 Z" fill="url(#fr)"/><path d="M1.4 1.2 L6.4 0.5 L7.4 1 L7.4 15 L5.6 15.8 L1.4 14.8 Z" fill="url(#fl)"/><path d="M6.7 1.2 L6.7 15" stroke="#c8a22e" stroke-width="1" opacity=".95"/><path d="M1.4 14.6 L5.6 15.6 L7.4 14.9" fill="none" stroke="#d9bb4a" stroke-width=".7"/></svg><div class="t" style="left:36.5px;top:5px">migwiz</div><div class="t" style="left:276.5px;top:5px;letter-spacing:0">11/2/2020 7:30 AM</div><div class="t" style="left:396.5px;top:5px">File folder</div></div>
<div class="row" style="top:347px"><svg class="abs" style="left:18px;top:2px" width="16" height="16" viewBox="0 0 16 16"><defs><linearGradient id="fl" x1="0" y1="0" x2="0" y2="1"><stop offset="0" stop-color="#f7ee98"/><stop offset=".55" stop-color="#ecd868"/><stop offset="1" stop-color="#d4b53a"/></linearGradient><linearGradient id="fr" x1="0" y1="0" x2="0" y2="1"><stop offset="0" stop-color="#eedb68"/><stop offset=".55" stop-color="#ecd970"/><stop offset="1" stop-color="#d8ba46"/></linearGradient></defs><path d="M6.6 0.8 L12.8 1 L12.8 7.5 L13.8 7.8 L13.8 14 L6.6 14.6 Z" fill="url(#fr)"/><path d="M1.4 1.2 L6.4 0.5 L7.4 1 L7.4 15 L5.6 15.8 L1.4 14.8 Z" fill="url(#fl)"/><path d="M6.7 1.2 L6.7 15" stroke="#c8a22e" stroke-width="1" opacity=".95"/><path d="M1.4 14.6 L5.6 15.6 L7.4 14.9" fill="none" stroke="#d9bb4a" stroke-width=".7"/></svg><div class="t" style="left:36.5px;top:5px">MRT</div><div class="t" style="left:276.5px;top:5px;letter-spacing:0">11/2/2020 7:43 AM</div><div class="t" style="left:396.5px;top:5px">File folder</div></div>
<div class="row" style="top:369px"><svg class="abs" style="left:18px;top:2px" width="16" height="16" viewBox="0 0 16 16"><defs><linearGradient id="fl" x1="0" y1="0" x2="0" y2="1"><stop offset="0" stop-color="#f7ee98"/><stop offset=".55" stop-color="#ecd868"/><stop offset="1" stop-color="#d4b53a"/></linearGradient><linearGradient id="fr" x1="0" y1="0" x2="0" y2="1"><stop offset="0" stop-color="#eedb68"/><stop offset=".55" stop-color="#ecd970"/><stop offset="1" stop-color="#d8ba46"/></linearGradient></defs><path d="M6.6 0.8 L12.8 1 L12.8 7.5 L13.8 7.8 L13.8 14 L6.6 14.6 Z" fill="url(#fr)"/><path d="M1.4 1.2 L6.4 0.5 L7.4 1 L7.4 15 L5.6 15.8 L1.4 14.8 Z" fill="url(#fl)"/><path d="M6.7 1.2 L6.7 15" stroke="#c8a22e" stroke-width="1" opacity=".95"/><path d="M1.4 14.6 L5.6 15.6 L7.4 14.9" fill="none" stroke="#d9bb4a" stroke-width=".7"/></svg><div class="t" style="left:36.5px;top:5px">Msdtc</div><div class="t" style="left:276.5px;top:5px;letter-spacing:0">7/14/2009 3:37 AM</div><div class="t" style="left:396.5px;top:5px">File folder</div></div>
<div class="row" style="top:391px"><svg class="abs" style="left:18px;top:2px" width="16" height="16" viewBox="0 0 16 16"><defs><linearGradient id="fl" x1="0" y1="0" x2="0" y2="1"><stop offset="0" stop-color="#f7ee98"/><stop offset=".55" stop-color="#ecd868"/><stop offset="1" stop-color="#d4b53a"/></linearGradient><linearGradient id="fr" x1="0" y1="0" x2="0" y2="1"><stop offset="0" stop-color="#eedb68"/><stop offset=".55" stop-color="#ecd970"/><stop offset="1" stop-color="#d8ba46"/></linearGradient></defs><path d="M6.6 0.8 L12.8 1 L12.8 7.5 L13.8 7.8 L13.8 14 L6.6 14.6 Z" fill="url(#fr)"/><path d="M1.4 1.2 L6.4 0.5 L7.4 1 L7.4 15 L5.6 15.8 L1.4 14.8 Z" fill="url(#fl)"/><path d="M6.7 1.2 L6.7 15" stroke="#c8a22e" stroke-width="1" opacity=".95"/><path d="M1.4 14.6 L5.6 15.6 L7.4 14.9" fill="none" stroke="#d9bb4a" stroke-width=".7"/></svg><div class="t" style="left:36.5px;top:5px">MUI</div><div class="t" style="left:276.5px;top:5px;letter-spacing:0">4/12/2011 3:16 AM</div><div class="t" style="left:396.5px;top:5px">File folder</div></div>

  <div id="hdr">
   <div class="t" style="left:15px;top:6px">Name</div><svg class="abs" style="left:47px;top:9px" width="7" height="4"><path d="M0 4 L3.5 0 L7 4 Z" fill="#aeaaa2"/></svg>
   <div class="sep" style="left:270px"></div><div class="t" style="left:276px;top:6px">Date modified</div>
   <div class="sep" style="left:390px"></div><div class="t" style="left:396px;top:6px">Type</div>
   <div class="sep" style="left:510px"></div><div class="t" style="left:516px;top:6px">Size</div>
   <div class="sep" style="left:590px"></div>
  </div>
 </div>
 <div id="sb"><div class="sbb" style="top:0;height:17px"><svg width="16" height="17"><path d="M4 10 L12 10 L8 6 Z" fill="#000"/></svg></div><div class="sbb" style="top:17px;height:19px"></div><div class="sbb" style="top:396px;height:17px"><svg width="16" height="17"><path d="M5 7 L12 7 L8.5 11 Z" fill="#000"/></svg></div></div>
 <div id="details"><svg class="abs" style="left:16px;top:0px" width="64" height="46" viewBox="0 0 64 46">
<defs><linearGradient id="d1" x1="0" y1="0" x2="1" y2="1"><stop offset="0" stop-color="#f8f0b4"/><stop offset="1" stop-color="#eeda7c"/></linearGradient>
<linearGradient id="d2" x1="0" y1="0" x2="0" y2="1"><stop offset="0" stop-color="#f0e084"/><stop offset="1" stop-color="#e6cc5c"/></linearGradient>
<radialGradient id="ds" cx=".5" cy=".5" r=".5"><stop offset="0" stop-color="#000" stop-opacity=".16"/><stop offset="1" stop-color="#000" stop-opacity="0"/></radialGradient></defs>
<ellipse cx="37" cy="31" rx="11" ry="5" fill="url(#ds)" transform="rotate(-40 37 31)"/>
<path d="M14.6 2.4 L30.6 2.4 L30.6 36.9 L14.6 36.9 Z" fill="url(#d2)"/>
<path d="M30.6 24.5 L33 24 L33 36 L30.6 36.9 Z" fill="#f2e498"/>
<path d="M4.75 1.6 L7 1 L15.25 7.25 L15.25 40.6 L13.4 41.6 L4.75 33.5 Z" fill="url(#d1)"/>
<path d="M7 1 L15.25 7.25 L15.25 40.6" fill="none" stroke="#d8c060" stroke-width=".7"/>
<path d="M15.6 8 L15.6 36.9" stroke="#d4b84c" stroke-width=".8" opacity=".7"/>
</svg><div class="t" style="left:78.5px;top:5px;font-size:12px;line-height:14px;letter-spacing:.2px">2,985 items</div></div>
</div>
<div id="task">
 <div id="start"><svg class="abs" style="left:2px;top:2px" width="17" height="17" viewBox="0 0 17 17">
<path d="M2.6 3 Q5 1 7.6 2.6 L6.6 7.6 Q4.2 6.2 1.6 8 Z" fill="#e8542c"/>
<path d="M8.6 3 Q11 4.6 14.2 2.4 L13.2 7.4 Q10.4 9.4 7.6 8 Z" fill="#6cb83a"/>
<path d="M1.4 9 Q4 7.2 6.4 8.8 L5.4 13.8 Q3 12.4 .4 14 Z" fill="#2c7ad8"/>
<path d="M7.4 9.2 Q10 10.6 13 8.6 L12 13.6 Q9.2 15.6 6.4 14.2 Z" fill="#f6b818"/></svg><div class="t" style="left:18.5px;top:4px;font-weight:bold;font-size:11.5px;line-height:14px;letter-spacing:.55px">Start</div></div>
 <svg class="abs" style="left:70px;top:6px" width="20" height="20" viewBox="0 0 20 20">
<circle cx="9.4" cy="9.6" r="6.6" fill="#3aa0dc" stroke="#1c70b4" stroke-width=".8"/>
<path d="M5 9.8 A4.6 4.6 0 0 1 14 9.8 L14 10.8 L7.6 10.8 A2.4 2.4 0 0 0 12 12 L14 12.6 A4.8 4.8 0 0 1 5 9.8 Z M7.6 8.6 L11.6 8.6 A2.2 2.2 0 0 0 7.6 8.6 Z" fill="#eaf6fc" fill-rule="evenodd"/>
<path d="M1.4 15 C0 10 8 2 17 1.6 C12 3 5 8 3.6 14.6 Z" fill="#f2c430" opacity=".95"/>
<path d="M14.6 2.4 L18.2 1 L17 4.4" fill="#8ac43a"/></svg>
<div class="abs" style="left:97px;top:4px;width:32px;height:22px;background:#f6f5f2;box-shadow:inset 1px 1px #404040,inset 2px 2px #404040,inset -1px -1px #fff"></div>
<svg class="abs" style="left:104px;top:7px" width="18" height="18" viewBox="0 0 18 18">
<path d="M1.6 3.4 L1.6 2 L7 2 L8 3.2 L16 3.2 L16 6 Z" fill="#f0d87a" stroke="#d0b050" stroke-width=".5"/>
<path d="M1 5 L16.6 5 L16.2 11 L1.4 11 Z" fill="#f4e08c" stroke="#d0b050" stroke-width=".5"/>
<path d="M2.4 9.4 Q9 6.4 15.4 9.4 L15.4 15.6 L11.6 15.6 L11.6 11.8 L6.4 11.8 L6.4 15.6 L2.4 15.6 Z" fill="#3e96d8" stroke="#2470b0" stroke-width=".6"/>
<path d="M2.4 9.4 Q9 6.4 15.4 9.4 L15.4 10.8 Q9 8 2.4 10.8 Z" fill="#7cc4ee"/></svg>
<svg class="abs" style="left:138px;top:6px" width="18" height="18" viewBox="0 0 18 18">
<rect x="1" y="1" width="16" height="16" fill="#dbe8f6" stroke="#4a7cbc" stroke-width="1.2"/>
<rect x="2.6" y="2.6" width="12.8" height="12.8" fill="#c2d6ee"/>
<circle cx="9" cy="9" r="5.6" fill="#f28a1c" stroke="#d86a0c" stroke-width=".6"/>
<path d="M7.2 5.8 L12 9 L7.2 12.2 Z" fill="#fff"/></svg>
<svg class="abs" style="left:172px;top:6px" width="18" height="18" viewBox="0 0 18 18">
<circle cx="9" cy="9" r="7.4" fill="#db4437"/>
<path d="M9 9 L2.6 5.3 A7.4 7.4 0 0 0 7.4 16.2 Z" fill="#0f9d58"/>
<path d="M9 9 L15.4 5.3 A7.4 7.4 0 0 1 7.4 16.2 L10.8 10.6 Z" fill="#ffcd40"/>
<path d="M2.6 5.3 A7.4 7.4 0 0 1 15.4 5.3 L9 5.3 Z" fill="#db4437"/>
<circle cx="9" cy="9" r="3.6" fill="#f4f6f8"/><circle cx="9" cy="9" r="2.8" fill="#4a8af4"/></svg>
<svg class="abs" style="left:205px;top:5px" width="20" height="20" viewBox="0 0 20 20">
<defs><linearGradient id="op2" x1="0" y1="0" x2="0" y2="1"><stop offset="0" stop-color="#f04a3a"/><stop offset=".4" stop-color="#dc1c18"/><stop offset="1" stop-color="#940a0e"/></linearGradient></defs>
<ellipse cx="9.6" cy="10" rx="7.8" ry="8" fill="url(#op2)"/>
<ellipse cx="9.6" cy="10" rx="2.5" ry="5.8" fill="#fbe6e2"/></svg>
 <div id="tray"><svg class="abs" style="left:6px;top:4px" width="8" height="12" viewBox="0 0 8 12"><path d="M1 4.6 L3.6 2 L6.2 4.6 M1 9 L3.6 6.4 L6.2 9" fill="none" stroke="#000" stroke-width="1.4"/></svg>
<svg class="abs" style="left:22px;top:2px" width="18" height="17" viewBox="0 0 18 17">
<path d="M1.6 5.6 L4.6 5.6 L8.6 1.8 L8.6 15 L4.6 11.4 L1.6 11.4 Z" fill="#f8f8f6" stroke="#6e6e6a" stroke-width=".9"/>
<path d="M10.6 5.4 Q12.6 8.5 10.6 11.6 M12.8 3.4 Q16.2 8.5 12.8 13.6" fill="none" stroke="#7a7a76" stroke-width="1.1"/></svg>
<svg class="abs" style="left:46px;top:1px" width="18" height="18" viewBox="0 0 18 18">
<rect x="5.6" y="5" width="10.4" height="10.6" fill="#c8c4b4" stroke="#7a786c" stroke-width=".8"/>
<rect x="7" y="6.4" width="7.6" height="6" fill="#9aa6a0"/>
<path d="M2.2 1.4 V5 H6.4 V1.4 M4.3 5 V14.6 H7" fill="none" stroke="#4a4a46" stroke-width="1.2"/>
<rect x="1.6" y="1" width="1.4" height="3" fill="#e8e8e4"/><rect x="5.6" y="1" width="1.4" height="3" fill="#e8e8e4"/>
<path d="M11.6 9 L15.6 16.4 L7.6 16.4 Z" fill="#f6d21c" stroke="#a88a08" stroke-width=".6"/><rect x="11.2" y="11.4" width=".9" height="2.8" fill="#222"/><rect x="11.2" y="14.8" width=".9" height=".9" fill="#222"/></svg>
<svg class="abs" style="left:70px;top:1px" width="18" height="18" viewBox="0 0 18 18">
<path d="M2.6 1.6 V16.6" stroke="#6a6a66" stroke-width="1.6"/><path d="M2.6 1.6 V16.6" stroke="#f4f4f0" stroke-width=".6"/>
<path d="M4 3 Q7.6 1.4 10 3.4 Q12.6 5.2 16 3.6 L14.6 8.4 Q11.6 10.2 9 8.4 Q6.6 6.6 4 8.4 Z" fill="#fbfbf8" stroke="#6e6e6a" stroke-width=".9"/></svg>
<svg class="abs" style="left:155px;top:6px" width="15" height="12" viewBox="0 0 15 12">
<rect x=".5" y=".5" width="14" height="11" fill="#2c68c8" stroke="#1a3c7c" stroke-width="1"/>
<path d="M1 1 H14 V4 Q7 3 1 8 Z" fill="#5c9cec" opacity=".9"/><rect x="1" y="9.4" width="13" height="1.6" fill="#18305c"/></svg><div class="t" style="left:104px;top:5px;letter-spacing:0">8:21 AM</div></div>
</div>
<svg class="abs" style="left:1030px;top:600px" width="210" height="80" viewBox="0 0 210 80">
<g fill="#c6cace" fill-opacity=".55" font-family="Liberation Sans, sans-serif" font-weight="bold" font-size="50">
<text x="9" y="59" textLength="60" lengthAdjust="spacingAndGlyphs">ANY</text>
<text x="139" y="59" textLength="61" lengthAdjust="spacingAndGlyphs">RUN</text></g>
<path d="M84 11 L131 40 L84 69 Z" fill="none" stroke="#c6cace" stroke-opacity=".6" stroke-width="4.5" stroke-linejoin="round"/>
<path d="M93 27 L115 40 L93 53 Z" fill="none" stroke="#c6cace" stroke-opacity=".45" stroke-width="3" stroke-linejoin="round"/>
<path d="M84 11 L93 27 M131 40 L115 40 M84 69 L93 53" stroke="#c6cace" stroke-opacity=".4" stroke-width="2"/>
</svg>
</body></html>
